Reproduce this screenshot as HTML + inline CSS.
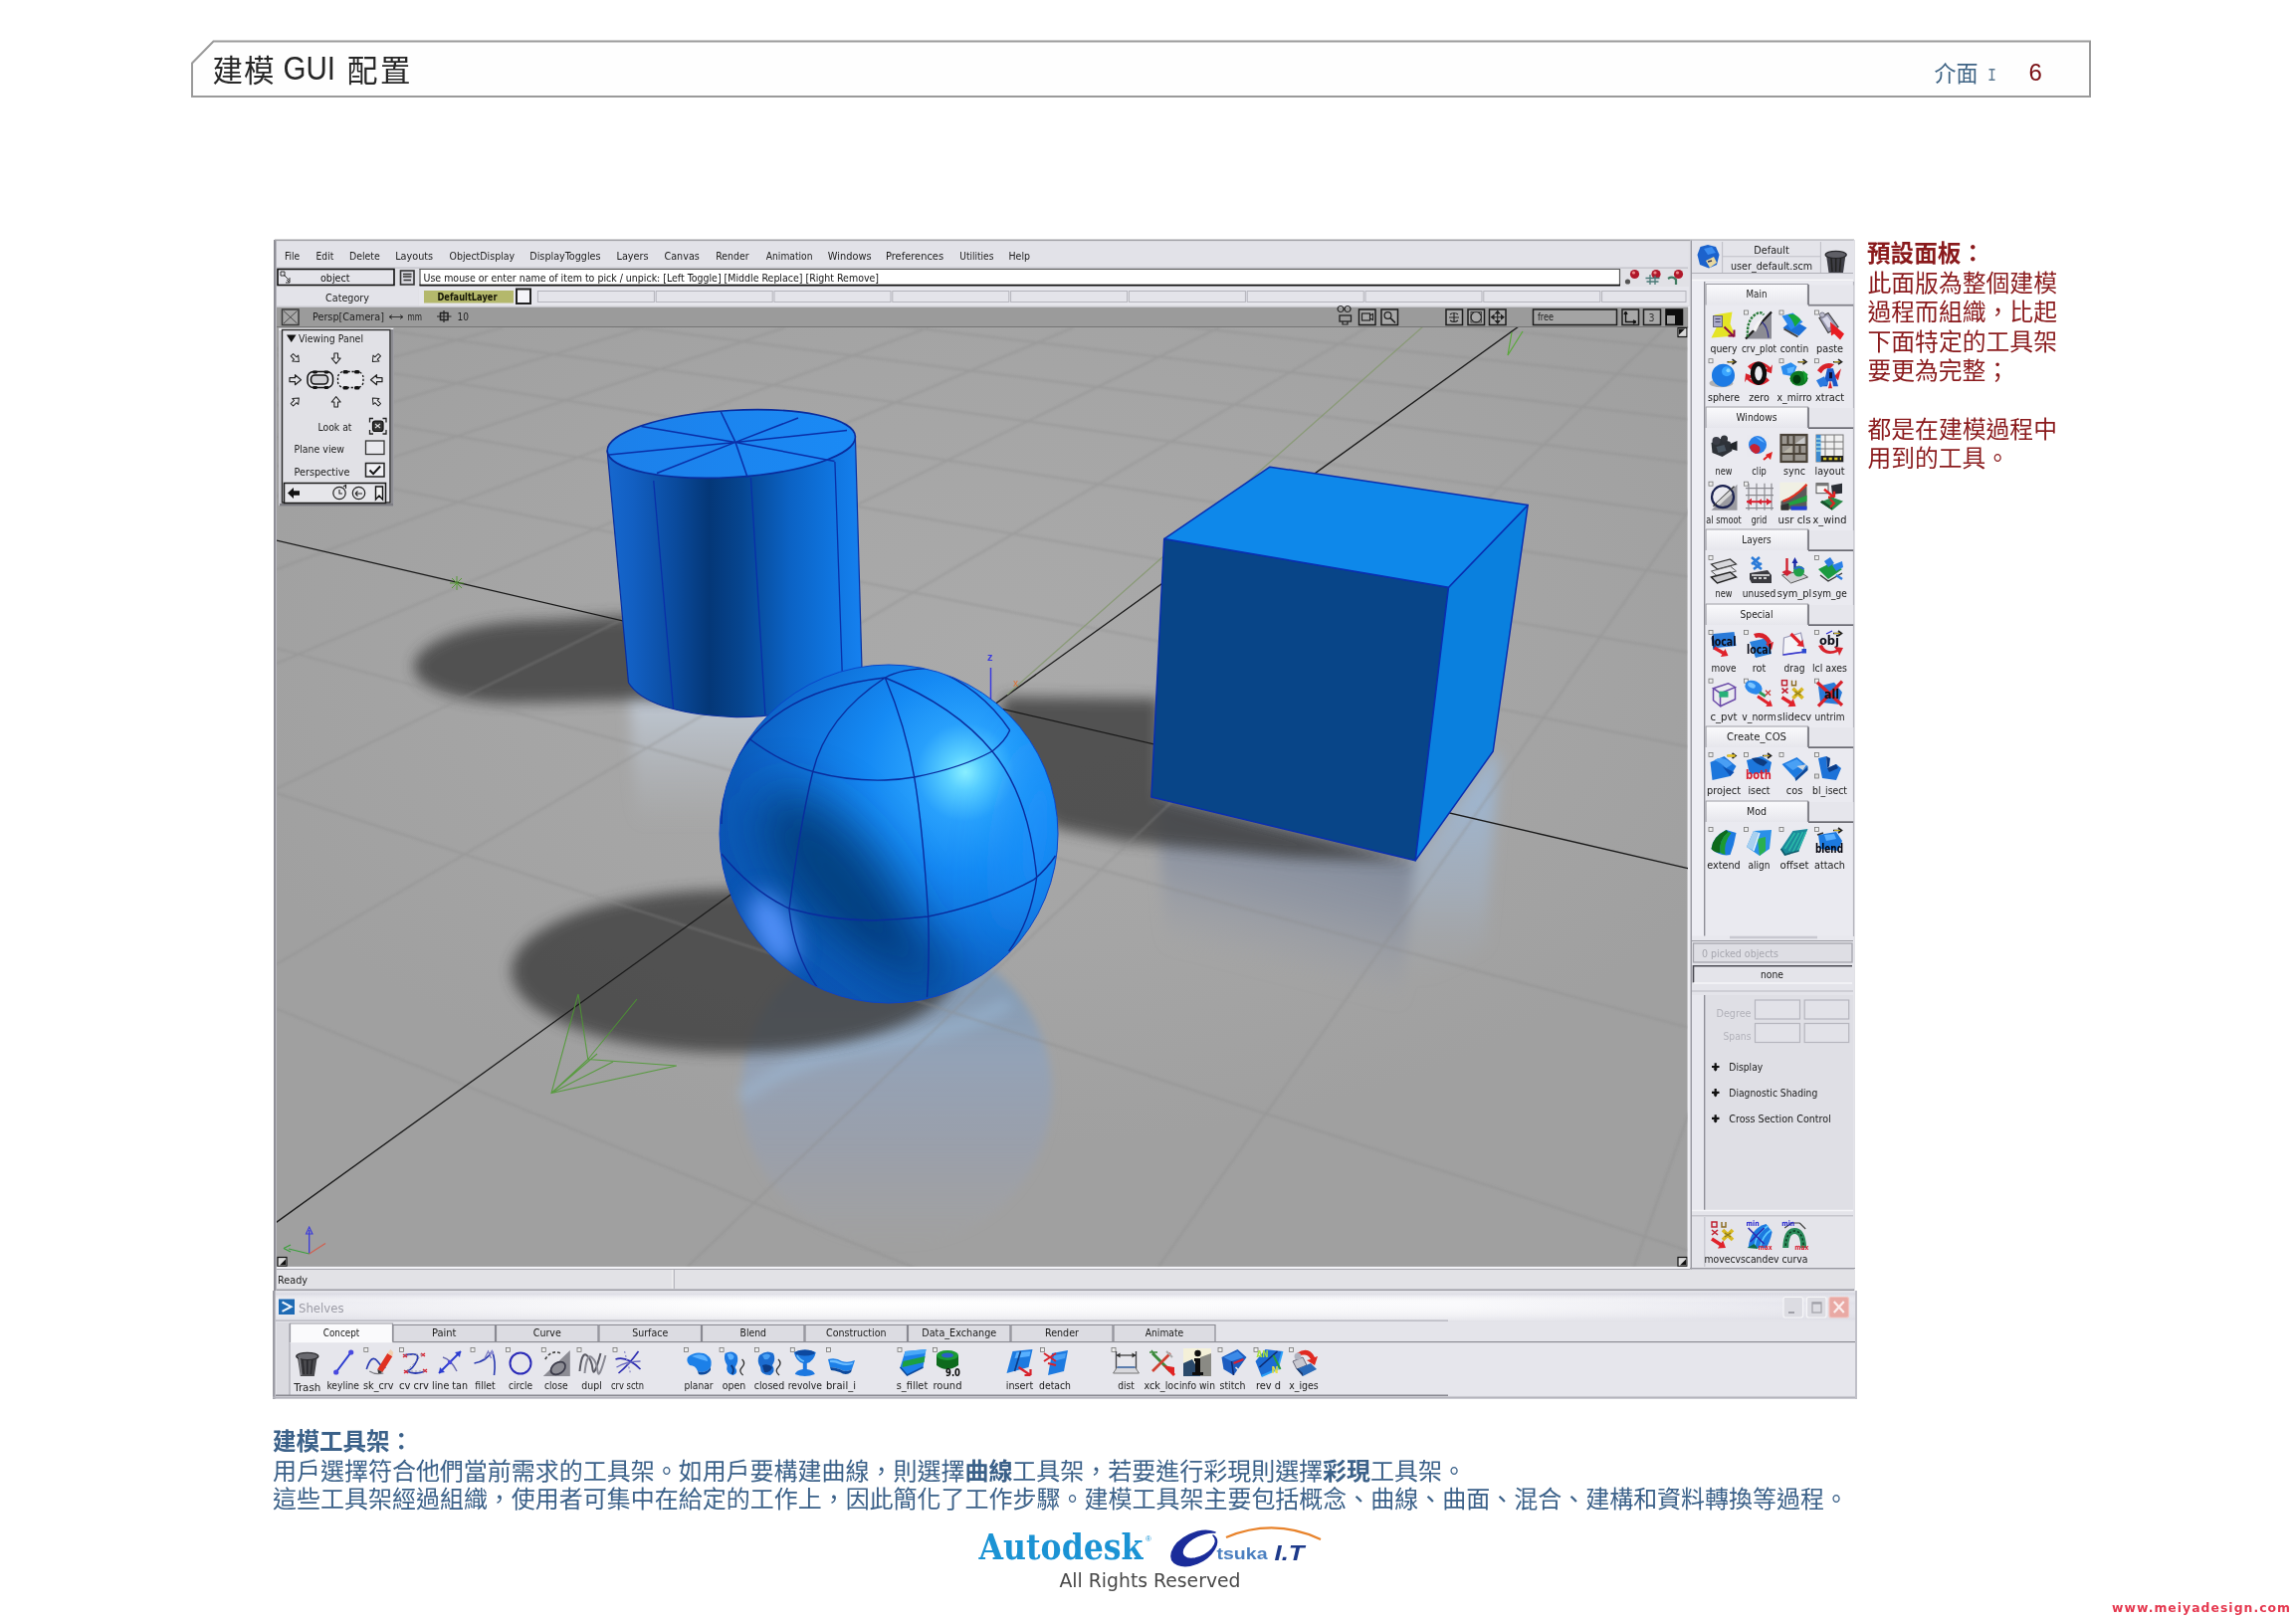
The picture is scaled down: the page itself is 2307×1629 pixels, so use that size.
<!DOCTYPE html>
<html lang="zh-Hant"><head><meta charset="utf-8"><title>建模 GUI 配置</title>
<style>
html,body{margin:0;padding:0;background:#fff}
body{width:2307px;height:1629px;overflow:hidden;position:relative}
svg{position:absolute;left:0;top:0;display:block}
svg{will-change:transform}
text{font-family:"Liberation Sans","Noto Sans CJK TC",sans-serif;white-space:pre}
.ui text{font-family:"DejaVu Sans Condensed","Liberation Sans",sans-serif}
</style></head><body>
<svg width="2307" height="1629" viewBox="0 0 2307 1629">
<g id="slide">
<path d="M193 97L193 63.5L214.5 41.5L2100 41.5L2100 97Z" fill="#fefefe" stroke="#9a9a9a" stroke-width="2" />
<text y="82" font-size="30.5" fill="#262626"><tspan x="213.5">建</tspan><tspan x="245">模</tspan><tspan x="349">配</tspan><tspan x="382">置</tspan></text>
<text x="284.5" y="80" font-size="32.5" fill="#262626" textLength="52.5" lengthAdjust="spacingAndGlyphs" >GUI</text>
<text x="1943.5" y="82" font-size="22.5" fill="#3f6485" textLength="44" lengthAdjust="spacingAndGlyphs" >介面</text>
<text x="1997" y="80.5" font-size="18" fill="#5b7890" textLength="9" lengthAdjust="spacingAndGlyphs" style='font-family:"Liberation Mono",monospace' >I</text>
<text x="2038.5" y="81" font-size="24" fill="#7a0f14" >6</text>
<text x="1876" y="263" font-size="24" fill="#8a1a1c" font-weight="bold" textLength="118" lengthAdjust="spacingAndGlyphs" >預設面板：</text>
<text x="1876.5" y="293" font-size="24" fill="#8a1a1c" textLength="190.5" lengthAdjust="spacingAndGlyphs" >此面版為整個建模</text>
<text x="1876.5" y="322.3" font-size="24" fill="#8a1a1c" textLength="190.5" lengthAdjust="spacingAndGlyphs" >過程而組織，比起</text>
<text x="1876.5" y="351.6" font-size="24" fill="#8a1a1c" textLength="190.5" lengthAdjust="spacingAndGlyphs" >下面特定的工具架</text>
<text x="1876.5" y="380.90000000000003" font-size="24" fill="#8a1a1c" textLength="142.5" lengthAdjust="spacingAndGlyphs" >要更為完整；</text>
<text x="1876.5" y="439.50000000000006" font-size="24" fill="#8a1a1c" textLength="190.5" lengthAdjust="spacingAndGlyphs" >都是在建模過程中</text>
<text x="1876.5" y="468.80000000000007" font-size="24" fill="#8a1a1c" textLength="142.5" lengthAdjust="spacingAndGlyphs" >用到的工具。</text>
<text x="274" y="1457" font-size="24" fill="#3b6189" font-weight="bold" textLength="141" lengthAdjust="spacingAndGlyphs" >建模工具架：</text>
<text x="274" y="1486.5" font-size="24" fill="#3b6189" textLength="1199" lengthAdjust="spacing"><tspan>用戶選擇符合他們當前需求的工具架。如用戶要構建曲線，則選擇</tspan><tspan font-weight="bold">曲線</tspan><tspan>工具架，若要進行彩現則選擇</tspan><tspan font-weight="bold">彩現</tspan><tspan>工具架。</tspan></text>
<text x="274" y="1515" font-size="24" fill="#3b6189" textLength="1583" lengthAdjust="spacingAndGlyphs" >這些工具架經過組織，使用者可集中在給定的工作上，因此簡化了工作步驟。建模工具架主要包括概念、曲線、曲面、混合、建構和資料轉換等過程。</text>
<text x="983.5" y="1567.3" font-size="35" fill="#1b93d4" font-weight="bold" textLength="165" lengthAdjust="spacingAndGlyphs" style='font-family:"DejaVu Serif Condensed","DejaVu Serif","Liberation Serif",serif' >Autodesk</text>
<text x="1151" y="1549" font-size="8" fill="#1b95d6" >®</text>
<path d="M1221 1540C1205 1534 1182 1546 1177.5 1560C1174 1572 1188 1577 1203 1571C1218 1565 1228 1549 1219 1543C1227 1551 1214 1563 1201 1566C1190 1568 1186 1562 1189 1556C1194 1546 1210 1539 1221 1540Z" fill="#1a2c9a" stroke="#1a2c9a" stroke-width="1.5" stroke-linejoin="round"/>
<path d="M1232 1545Q1280 1525 1327 1547" fill="none" stroke="#e8822a" stroke-width="2.2" />
<text x="1222.5" y="1567" font-size="17" fill="#4a7fc0" font-weight="bold" textLength="51" lengthAdjust="spacingAndGlyphs" >tsuka</text>
<text x="1280.5" y="1568" font-size="22" fill="#1d3a8a" font-weight="bold" textLength="30" lengthAdjust="spacingAndGlyphs" font-style="italic">I.T</text>
<text x="1064.5" y="1595" font-size="19" fill="#484848" textLength="182" lengthAdjust="spacingAndGlyphs" style='font-family:"DejaVu Sans","Liberation Sans",sans-serif' >All Rights Reserved</text>
<text x="2122" y="1620" font-size="12.4" font-weight="bold" fill="#e5384f" textLength="179" lengthAdjust="spacing" style='font-family:"DejaVu Sans","Liberation Sans",sans-serif'>www.meiyadesign.com</text>
</g>
<g id="chrome">
<g class="ui">
<rect x="276" y="241" width="1587" height="1056" fill="#e1e1e6" />
<rect x="275" y="241" width="2.5" height="1056" fill="#8e8e96" />
<rect x="276" y="240.5" width="1587" height="1.6" fill="#a2a2a8" />
<rect x="1862.3" y="241" width="1.2" height="1056" fill="#c4c4cc" />
<rect x="278" y="243" width="1418" height="26" fill="#e2e2e8" />
<text x="286" y="261.3" font-size="10.8" fill="#1c1c1c" textLength="15.2" lengthAdjust="spacingAndGlyphs" >File</text>
<text x="317.6" y="261.3" font-size="10.8" fill="#1c1c1c" textLength="17.7" lengthAdjust="spacingAndGlyphs" >Edit</text>
<text x="350.9" y="261.3" font-size="10.8" fill="#1c1c1c" textLength="30.9" lengthAdjust="spacingAndGlyphs" >Delete</text>
<text x="397.2" y="261.3" font-size="10.8" fill="#1c1c1c" textLength="37.9" lengthAdjust="spacingAndGlyphs" >Layouts</text>
<text x="451.5" y="261.3" font-size="10.8" fill="#1c1c1c" textLength="65.7" lengthAdjust="spacingAndGlyphs" >ObjectDisplay</text>
<text x="532.3" y="261.3" font-size="10.8" fill="#1c1c1c" textLength="71.2" lengthAdjust="spacingAndGlyphs" >DisplayToggles</text>
<text x="619.5" y="261.3" font-size="10.8" fill="#1c1c1c" textLength="32.1" lengthAdjust="spacingAndGlyphs" >Layers</text>
<text x="667.5" y="261.3" font-size="10.8" fill="#1c1c1c" textLength="35.3" lengthAdjust="spacingAndGlyphs" >Canvas</text>
<text x="719.3" y="261.3" font-size="10.8" fill="#1c1c1c" textLength="33.3" lengthAdjust="spacingAndGlyphs" >Render</text>
<text x="769.8" y="261.3" font-size="10.8" fill="#1c1c1c" textLength="46.7" lengthAdjust="spacingAndGlyphs" >Animation</text>
<text x="831.8" y="261.3" font-size="10.8" fill="#1c1c1c" textLength="43.7" lengthAdjust="spacingAndGlyphs" >Windows</text>
<text x="890" y="261.3" font-size="10.8" fill="#1c1c1c" textLength="58.1" lengthAdjust="spacingAndGlyphs" >Preferences</text>
<text x="964.3" y="261.3" font-size="10.8" fill="#1c1c1c" textLength="34.1" lengthAdjust="spacingAndGlyphs" >Utilities</text>
<text x="1013.5" y="261.3" font-size="10.8" fill="#1c1c1c" textLength="21.5" lengthAdjust="spacingAndGlyphs" >Help</text>
<rect x="278" y="268.6" width="1418" height="1" fill="#b8b8c0" />
<rect x="279" y="270.5" width="117" height="16" fill="#e4e4ea" stroke="#111" stroke-width="1.6" />
<path d="M282 273h4v4h-4zM285 276l6 6M288 281l3 3M291 279v5h-4" fill="none" stroke="#333" stroke-width="1" />
<text x="322" y="283.2" font-size="10.8" fill="#111" textLength="29.5" lengthAdjust="spacingAndGlyphs" >object</text>
<rect x="402.5" y="272" width="13.5" height="14" fill="#d8d8de" stroke="#333" stroke-width="1.6" />
<path d="M405 275.5h8.5M405 278h8.5M405.5 281.5h7.5" fill="none" stroke="#333" stroke-width="1.3" />
<rect x="421.5" y="270" width="1206" height="17" fill="#ffffff" />
<path d="M421.5 270.5H1627.5" fill="none" stroke="#555" stroke-width="1.2" />
<path d="M422 270V287M1627.5 270V287" fill="none" stroke="#555" stroke-width="1.2" />
<path d="M421.5 286.7H1628" fill="none" stroke="#111" stroke-width="1.8" />
<text x="425.5" y="283.3" font-size="10.6" fill="#111" textLength="457.5" lengthAdjust="spacingAndGlyphs" >Use mouse or enter name of item to pick / unpick: [Left Toggle] [Middle Replace] [Right Remove]</text>
<circle cx="1642.5" cy="275.5" r="4.6" fill="#b0182a"/>
<circle cx="1641.5" cy="274" r="1.6" fill="#e88"/>
<circle cx="1635.5" cy="283" r="2.6" fill="#555"/>
<circle cx="1664.0" cy="275.5" r="4.6" fill="#b0182a"/>
<circle cx="1663.0" cy="274" r="1.6" fill="#e88"/>
<path d="M1653.5 279.5h14M1654.5 283h12M1658.0 276v10M1663.0 277v9" fill="none" stroke="#4a7a78" stroke-width="1.3" />
<circle cx="1686.5" cy="275.5" r="4.6" fill="#b0182a"/>
<circle cx="1685.5" cy="274" r="1.6" fill="#e88"/>
<path d="M1676 280q5 -3 8 1v5" fill="none" stroke="#3f7a60" stroke-width="2.2" />
<rect x="278" y="289" width="142" height="19" fill="#e3e3e9" />
<text x="327" y="303.2" font-size="10.8" fill="#1c1c1c" textLength="44" lengthAdjust="spacingAndGlyphs" >Category</text>
<rect x="421" y="288" width="1276" height="20" fill="#e6e6ec" />
<rect x="426" y="292" width="90" height="12.5" fill="#b4b86c" />
<text x="439.5" y="301.8" font-size="10.6" fill="#151505" font-weight="bold" textLength="60" lengthAdjust="spacingAndGlyphs" >DefaultLayer</text>
<rect x="519" y="290.5" width="14" height="14.5" fill="#f4f4f8" stroke="#222" stroke-width="2" />
<rect x="540.4" y="292.5" width="117" height="11" fill="#e4e4ea" stroke="#b4b4bc" stroke-width="1" />
<rect x="659.2" y="292.5" width="117" height="11" fill="#e4e4ea" stroke="#b4b4bc" stroke-width="1" />
<rect x="778.0" y="292.5" width="117" height="11" fill="#e4e4ea" stroke="#b4b4bc" stroke-width="1" />
<rect x="896.8" y="292.5" width="117" height="11" fill="#e4e4ea" stroke="#b4b4bc" stroke-width="1" />
<rect x="1015.6" y="292.5" width="117" height="11" fill="#e4e4ea" stroke="#b4b4bc" stroke-width="1" />
<rect x="1134.4" y="292.5" width="117" height="11" fill="#e4e4ea" stroke="#b4b4bc" stroke-width="1" />
<rect x="1253.2" y="292.5" width="117" height="11" fill="#e4e4ea" stroke="#b4b4bc" stroke-width="1" />
<rect x="1372.0" y="292.5" width="117" height="11" fill="#e4e4ea" stroke="#b4b4bc" stroke-width="1" />
<rect x="1490.8" y="292.5" width="117" height="11" fill="#e4e4ea" stroke="#b4b4bc" stroke-width="1" />
<rect x="1609.6" y="292.5" width="84.4" height="11" fill="#e4e4ea" stroke="#b4b4bc" stroke-width="1" />
<rect x="278" y="308.5" width="1419" height="20.5" fill="#9b9b9b" />
<rect x="278" y="307.6" width="1419" height="1.2" fill="#c8c8cc" />
<rect x="278" y="328.2" width="1419" height="1.5" fill="#6e6e6e" />
<rect x="283.5" y="311" width="16.5" height="15.5" fill="#a6a6a6" stroke="#3a3a3a" stroke-width="1.5" />
<path d="M285 312.5L298.5 325M298.5 312.5L285 325" fill="none" stroke="#4a4a4a" stroke-width="1" />
<text x="314" y="322.3" font-size="10.8" fill="#222" textLength="72" lengthAdjust="spacingAndGlyphs" >Persp[Camera]</text>
<path d="M391 318.5h14M391 318.5l3 -2M391 318.5l3 2M405 318.5l-3 -2M405 318.5l-3 2" fill="none" stroke="#333" stroke-width="1" />
<text x="409.5" y="322.3" font-size="10.5" fill="#222" textLength="14.5" lengthAdjust="spacingAndGlyphs" >mm</text>
<rect x="442.5" y="314.5" width="7.5" height="7" fill="none" stroke="#222" stroke-width="1.5" />
<path d="M439 318h14.5M446 312v12" fill="none" stroke="#222" stroke-width="1.2" />
<text x="459.5" y="322.3" font-size="10.5" fill="#222" textLength="11.5" lengthAdjust="spacingAndGlyphs" >10</text>
<path d="M1347 313.5a3 3 0 1 1 0.1 0M1354 313.5a3 3 0 1 1 0.1 0" fill="none" stroke="#222" stroke-width="1.2" />
<rect x="1346" y="317" width="11.5" height="6" fill="none" stroke="#222" stroke-width="1.3" />
<path d="M1349 323v3h5v-3" fill="none" stroke="#222" stroke-width="1.2" />
<rect x="1365.5" y="311" width="16.5" height="15.5" fill="#a8a8a8" stroke="#1e1e1e" stroke-width="1.5" />
<rect x="1368.5" y="315" width="8" height="7" fill="none" stroke="#222" stroke-width="1.2" />
<path d="M1376.5 317l3 -1.5v6l-3 -1.5" fill="none" stroke="#222" stroke-width="1.1" />
<rect x="1388" y="311" width="16.5" height="15.5" fill="#a8a8a8" stroke="#1e1e1e" stroke-width="1.5" />
<circle cx="1394.5" cy="317" r="3.4" fill="none" stroke="#222" stroke-width="1.3"/>
<path d="M1397 319.5l5 5" fill="none" stroke="#222" stroke-width="1.6" />
<rect x="1453" y="311" width="16.5" height="15.5" fill="#a8a8a8" stroke="#1e1e1e" stroke-width="1.5" />
<path d="M1456 319h10M1461 314v10M1457 316q4 -3 8 0M1457 322q4 3 8 0" fill="none" stroke="#222" stroke-width="1.1" />
<rect x="1475" y="311" width="16.5" height="15.5" fill="#a8a8a8" stroke="#1e1e1e" stroke-width="1.5" />
<circle cx="1483.2" cy="318.7" r="5.2" fill="none" stroke="#222" stroke-width="1.2"/>
<rect x="1478" y="313.5" width="10.5" height="10.5" fill="none" stroke="#333" stroke-width="0.8" />
<rect x="1496.5" y="311" width="16.5" height="15.5" fill="#a8a8a8" stroke="#1e1e1e" stroke-width="1.5" />
<path d="M1499 318.7h11.5M1504.7 313v11.5M1504.7 312.5l-2 2.5h4zM1504.7 325l-2 -2.5h4zM1498.5 318.7l2.5 -2v4zM1511 318.7l-2.5 -2v4z" fill="#222" stroke="#222" stroke-width="1.1" />
<rect x="1540.5" y="311" width="84" height="15.5" fill="#a4a4a4" stroke="#1e1e1e" stroke-width="1.5" />
<text x="1545" y="322.2" font-size="10.5" fill="#222" textLength="16" lengthAdjust="spacingAndGlyphs" >free</text>
<rect x="1630" y="311" width="16.5" height="15.5" fill="#a8a8a8" stroke="#1e1e1e" stroke-width="1.5" />
<path d="M1633.5 313v10.5h10.5M1633.5 313l-1.5 3M1633.5 313l1.5 3M1644 323.5l-3 -1.5M1644 323.5l-3 1.5" fill="none" stroke="#111" stroke-width="1.4" />
<rect x="1651.5" y="311" width="17" height="15.5" fill="#a8a8a8" stroke="#1e1e1e" stroke-width="1.5" />
<text x="1656.5" y="323" font-size="10.5" fill="#333" >3</text>
<rect x="1674" y="311" width="16.5" height="15.5" fill="#0c0c0c" stroke="#0c0c0c" stroke-width="1.5" />
<rect x="1675" y="317" width="8" height="8.5" fill="#a0a0a0" />
<rect x="1696.2" y="308" width="1.6" height="966" fill="#f2f2f6" />
<rect x="278" y="1273" width="1420" height="2" fill="#f2f2f6" />
<rect x="278" y="1275.5" width="1585" height="20" fill="#e2e2e6" />
<rect x="278" y="1275" width="1585" height="1" fill="#a8a8b0" />
<rect x="278" y="1295.5" width="1585" height="1.5" fill="#9c9ca4" />
<rect x="675.5" y="1276" width="1.2" height="19" fill="#fafafa" />
<rect x="676.7" y="1276" width="1" height="19" fill="#a8a8b0" />
<text x="279" y="1289.5" font-size="10.8" fill="#222" textLength="30" lengthAdjust="spacingAndGlyphs" >Ready</text>
</g>
</g>
<g id="scene">
<defs>
<clipPath id="vp"><rect x="278" y="329" width="1417.5" height="943.8"/></clipPath>
<radialGradient id="floor" gradientUnits="userSpaceOnUse" cx="1000" cy="660" r="820" gradientTransform="translate(1000 660) scale(1 0.6) translate(-1000 -660)"><stop offset="0" stop-color="#aaaaaa"/><stop offset="0.6" stop-color="#a5a5a5"/><stop offset="1" stop-color="#a0a0a0"/></radialGradient>
<filter id="b1" filterUnits="userSpaceOnUse" x="270" y="320" width="1440" height="960"><feGaussianBlur stdDeviation="0.9"/></filter>
<linearGradient id="gridg" gradientUnits="userSpaceOnUse" x1="0" y1="329" x2="0" y2="1273"><stop offset="0" stop-color="#cacaca"/><stop offset="0.3" stop-color="#c0c0c0"/><stop offset="0.5" stop-color="#a6a6a6"/><stop offset="0.75" stop-color="#949494"/><stop offset="1" stop-color="#8a8a8a"/></linearGradient>
<filter id="b4" x="-30%" y="-30%" width="160%" height="160%"><feGaussianBlur stdDeviation="4"/></filter>
<filter id="b7" x="-30%" y="-30%" width="160%" height="160%"><feGaussianBlur stdDeviation="7"/></filter>
<filter id="b12" x="-40%" y="-40%" width="180%" height="180%"><feGaussianBlur stdDeviation="12"/></filter>
<filter id="b25" x="-60%" y="-60%" width="220%" height="220%"><feGaussianBlur stdDeviation="25"/></filter>
<filter id="sb25" filterUnits="userSpaceOnUse" x="600" y="560" width="600" height="560"><feGaussianBlur stdDeviation="24"/></filter>
<filter id="sb12" filterUnits="userSpaceOnUse" x="600" y="560" width="600" height="560"><feGaussianBlur stdDeviation="11"/></filter>
<filter id="b40" x="-80%" y="-80%" width="260%" height="260%"><feGaussianBlur stdDeviation="40"/></filter>
<linearGradient id="cylb" gradientUnits="userSpaceOnUse" x1="611" y1="0" x2="864" y2="0"><stop offset="0" stop-color="#1668cf"/><stop offset="0.10" stop-color="#125fc2"/><stop offset="0.27" stop-color="#0a4a9c"/><stop offset="0.40" stop-color="#043777"/><stop offset="0.53" stop-color="#06458f"/><stop offset="0.72" stop-color="#0b62c4"/><stop offset="0.88" stop-color="#0f74de"/><stop offset="1" stop-color="#1580ee"/></linearGradient>
<linearGradient id="cylt" gradientUnits="userSpaceOnUse" x1="611" y1="0" x2="860" y2="0"><stop offset="0" stop-color="#1c80ea"/><stop offset="1" stop-color="#1a8af5"/></linearGradient>
<radialGradient id="sph" gradientUnits="userSpaceOnUse" cx="970" cy="776" r="330"><stop offset="0" stop-color="#8af0ff"/><stop offset="0.055" stop-color="#5ad0ff"/><stop offset="0.15" stop-color="#28a0fc"/><stop offset="0.3" stop-color="#158af4"/><stop offset="0.5" stop-color="#0f72da"/><stop offset="0.7" stop-color="#0b5cbc"/><stop offset="0.9" stop-color="#0a50aa"/><stop offset="1" stop-color="#0a4ca2"/></radialGradient>
<clipPath id="sphc"><circle cx="893" cy="838" r="170"/></clipPath>
<linearGradient id="refc" gradientUnits="userSpaceOnUse" x1="1289" y1="833" x2="1254" y2="975"><stop offset="0" stop-color="#7e889a" stop-opacity="0.95"/><stop offset="0.45" stop-color="#8a92a2" stop-opacity="0.7"/><stop offset="0.8" stop-color="#969ba6" stop-opacity="0.3"/><stop offset="1" stop-color="#a0a2a6" stop-opacity="0"/></linearGradient>
<linearGradient id="refc2" gradientUnits="userSpaceOnUse" x1="1461" y1="810" x2="1461" y2="985"><stop offset="0" stop-color="#9fb6d0" stop-opacity="0.9"/><stop offset="0.5" stop-color="#a2b2c6" stop-opacity="0.55"/><stop offset="1" stop-color="#a4a8ae" stop-opacity="0"/></linearGradient>
<linearGradient id="refcy" gradientUnits="userSpaceOnUse" x1="0" y1="700" x2="0" y2="830"><stop offset="0" stop-color="#c2ccd8" stop-opacity="0.9"/><stop offset="1" stop-color="#b8bec6" stop-opacity="0"/></linearGradient>
<linearGradient id="refs" gradientUnits="userSpaceOnUse" x1="0" y1="1000" x2="0" y2="1256"><stop offset="0" stop-color="#7a98ba" stop-opacity="0.7"/><stop offset="0.25" stop-color="#8ea2be" stop-opacity="0.72"/><stop offset="0.6" stop-color="#969fb2" stop-opacity="0.6"/><stop offset="0.85" stop-color="#9ea2ac" stop-opacity="0.32"/><stop offset="1" stop-color="#a4a5a8" stop-opacity="0"/></linearGradient>
</defs>
<g clip-path="url(#vp)">
<rect x="278" y="329" width="1417.5" height="943.8" fill="#a0a0a0" />
<rect x="278" y="329" width="1417.5" height="943.8" fill="url(#floor)" />
<g filter="url(#b7)">
<path d="M1162 802L1422 865L1408 1010L1172 950Z" fill="url(#refc)" />
<path d="M1422 865L1500 756L1506 758L1492 950L1410 1000Z" fill="url(#refc2)" />
<path d="M632 690Q745 730 862 690L862 830L640 830Z" fill="url(#refcy)" />
</g>
<circle cx="901" cy="1097" r="156" fill="url(#refs)" filter="url(#b4)"/>
<path d="M748 1100Q800 1062 880 1050T1010 1010" fill="none" stroke="#a4cbee" stroke-width="14" opacity="0.32" filter="url(#b7)" stroke-linecap="round"/>
<g filter="url(#b7)" fill="#3c3c3c" opacity="0.8">
<ellipse cx="528" cy="665" rx="112" ry="41" transform="rotate(-3 528 665)"/>
<path d="M520 625L640 618L760 660L760 700L540 706Z" fill="#3c3c3c" />
<ellipse cx="737" cy="976" rx="223" ry="82"/>
<path d="M1008 700L1165 702L1165 800L1421 866L1300 862L1130 846L1062 832L1030 805L1000 760Z" fill="#3c3c3c" />
</g>
<g filter="url(#b1)"><path d="M278.0 1013.9L1695.5 1589.3M278.0 797.3L1695.5 1256.4M278.0 651.6L1695.5 1032.4M278.0 468.0L1695.5 750.2M278.0 406.4L1695.5 655.5M278.0 356.9L1695.5 579.5M278.0 316.4L1695.5 517.2M278.0 282.6L1695.5 465.3M278.0 253.9L1695.5 421.2M278.0 229.3L1695.5 383.4M278.0 208.0L1695.5 350.6M1979.6 329.0L1641.8 1272.8M1825.9 329.0L1164.1 1272.8M1673.7 329.0L690.8 1272.8M1373.4 329.0L-242.8 1272.8M1225.3 329.0L-703.1 1272.8M1078.6 329.0L-1159.3 1272.8M933.2 329.0L-1611.2 1272.8M789.2 329.0L-2059.1 1272.8M646.4 329.0L-2503.0 1272.8M504.9 329.0L-2942.8 1272.8M364.7 329.0L-3378.8 1272.8" fill="none" stroke="#8c8c8c" stroke-width="2.0" opacity="0.42"/></g>
<line x1="277.5" y1="543" x2="1697" y2="872.8918" stroke="#1a1a1a" stroke-width="1.3" />
<line x1="1526" y1="328" x2="277.5" y2="1228.5" stroke="#1a1a1a" stroke-width="1.3" />
<line x1="1430" y1="328" x2="1012" y2="698" stroke="#8a9a78" stroke-width="1.3" />
<g stroke="#4f9a2a" stroke-width="1" opacity="0.9"><line x1="452" y1="586" x2="466" y2="586" stroke="#4f9a2a" stroke-width="1" /><line x1="459" y1="579" x2="459" y2="593" stroke="#4f9a2a" stroke-width="1" /><line x1="454" y1="581" x2="464" y2="591" stroke="#4f9a2a" stroke-width="1" /><line x1="454" y1="591" x2="464" y2="581" stroke="#4f9a2a" stroke-width="1" /></g>
<path d="M1519 334L1515 357L1530 333" fill="none" stroke="#5aa83a" stroke-width="1.2" />
<path d="M610.2 453.4L631.5 686.0Q650.0 716.0 735.0 720.5Q830.0 722.0 866.0 672.0L859.4 438.6Z" fill="url(#cylb)" stroke="#0a2fa0" stroke-width="1.2" />
<ellipse cx="734.8" cy="446" rx="124.8" ry="33.6" transform="rotate(-3.4 734.8 446)" fill="url(#cylt)" stroke="#0a2c9c" stroke-width="1.6"/>
<path d="M739.0 444.4L724.4 414.0M739.0 444.4L802.0 420.0M739.0 444.4L644.4 428.5M739.0 444.4L851.0 432.5M739.0 444.4L612.0 457.0M739.0 444.4L660.0 475.5M739.0 444.4L751.0 479.5M739.0 444.4L838.5 463.5" fill="none" stroke="#0a30a8" stroke-width="1.5" />
<path d="M656.7 483L676.7 713M754.4 480L768.9 718M838.9 464L846.7 690" fill="none" stroke="#0a30a8" stroke-width="1.3" />
<polygon points="1169.7,541.6 1455.5,590.2 1422.2,864.8 1156.9,801.0" fill="#084588" stroke="#0a2fb0" stroke-width="1.5" stroke-linejoin="round"/>
<polygon points="1455.5,590.2 1535.2,507.5 1500.2,755.0 1422.2,864.8" fill="#0a80de" stroke="#0a2fb0" stroke-width="1.5" stroke-linejoin="round"/>
<polygon points="1276.0,469.2 1535.2,507.5 1455.5,590.2 1169.7,541.6" fill="#0e88ea" stroke="#0a2fb0" stroke-width="1.5" stroke-linejoin="round"/>
<line x1="995.5" y1="671" x2="995.5" y2="704" stroke="#3a3ae0" stroke-width="1.5" />
<text x="992" y="664" font-size="11" fill="#3a3ae0" font-weight="bold" >z</text>
<text x="1018" y="690" font-size="10" fill="#e07030" >x</text>
<circle cx="893" cy="838" r="170" fill="url(#sph)"/>
<g clip-path="url(#sphc)">
<g filter="url(#sb25)">
<ellipse cx="838" cy="880" rx="105" ry="46" transform="rotate(50 838 880)" fill="#03326a" opacity="0.8"/>
<ellipse cx="908" cy="958" rx="62" ry="32" transform="rotate(35 908 958)" fill="#033672" opacity="0.65"/>
<ellipse cx="1040" cy="840" rx="30" ry="100" transform="rotate(8 1040 840)" fill="#1a90fa" opacity="0.7"/>
</g>
<g filter="url(#sb12)"><ellipse cx="777" cy="934" rx="19" ry="40" transform="rotate(-25 777 934)" fill="#5a96ff" opacity="0.9"/></g>
<path d="M889.3 681Q830 720 816.6 776T793 914Q798 960 821 992M889.3 681Q910 730 918.6 780.7T932.7 921Q934 965 931.5 1002M889.3 681Q960 710 997 755T1041.7 881.5Q1036 925 1013.6 956M889.3 681Q810 690 767 729T725 828M889.3 681Q905 672 936 671.6Q985 690 1014.7 733.8M751 741Q785 767 819 776T889 784Q905 783.5 919.8 780.7Q965 772 997 755Q1010 745 1014.7 733.8M725 858Q755 895 793 913Q835 925 877.6 925Q905 924 932.7 921Q995 908 1039 883.8Q1052 873 1060.5 860" fill="none" stroke="#0a2c9c" stroke-width="1.4" />
</g>
<circle cx="893" cy="838" r="170" fill="none" stroke="#0b45c8" stroke-width="1"/>
<path d="M554 1098.5L581 999L590.8 1064.5L679.8 1071ZM554 1098.5L590.8 1064.5M554 1098.5L600 1059M554 1098.5L616 1067M590.8 1064.5L640 1004" fill="none" stroke="#4c9a30" stroke-width="1.1" opacity="0.85"/>
<rect x="1686" y="329.5" width="9" height="9" fill="#d8d8d8" stroke="#111" stroke-width="1.2" />
<path d="M1687 330.5l6 0l-6 6z" fill="#111" />
<rect x="279" y="1263.5" width="9" height="9" fill="#d8d8d8" stroke="#111" stroke-width="1.2" />
<path d="M287 1265.5l0 6l-6 0z" fill="#111" />
<rect x="1686" y="1263.5" width="9" height="9" fill="#d8d8d8" stroke="#111" stroke-width="1.2" />
<path d="M1694 1265.5l0 6l-6 0z" fill="#111" />
<line x1="310.7" y1="1260" x2="310.7" y2="1236" stroke="#3a3adc" stroke-width="1.3" />
<path d="M307.5 1240L310.7 1233L314 1240Z" fill="none" stroke="#3a3adc" stroke-width="1.1" />
<path d="M310.7 1260L290 1255M285 1254.5L292 1251M285 1254.5L292 1258" fill="none" stroke="#3aa03a" stroke-width="1.2" />
<line x1="310.7" y1="1260" x2="327" y2="1249.5" stroke="#d06050" stroke-width="1.3" />
</g>
</g>
<g id="vpanel">
<g class="ui">
<rect x="280" y="329.5" width="115.5" height="178.5" fill="#c9c9cf" />
<rect x="280.5" y="330" width="114.5" height="2" fill="#f4f4f6" />
<rect x="393" y="331" width="2.5" height="177" fill="#8c8c92" />
<rect x="281" y="506" width="114" height="2.4" fill="#7c7c82" />
<rect x="283.5" y="331.5" width="108.5" height="173.5" fill="#e1e1e6" stroke="#2a2a2a" stroke-width="1.4" />
<path d="M288 336.5h9.5l-4.75 7.5z" fill="#111" />
<text x="300" y="344.3" font-size="10.8" fill="#222" textLength="65" lengthAdjust="spacingAndGlyphs" >Viewing Panel</text>
<path d="M-5.5 -2H0V-5L6 0L0 5V2H-5.5Z" transform="translate(296.7 360) rotate(45) scale(0.85)" fill="#e6e6ea" stroke="#222" stroke-width="1.2" stroke-linejoin="round"/>
<path d="M-5.5 -2H0V-5L6 0L0 5V2H-5.5Z" transform="translate(337.7 360) rotate(90) scale(0.9)" fill="#e6e6ea" stroke="#222" stroke-width="1.2" stroke-linejoin="round"/>
<path d="M-5.5 -2H0V-5L6 0L0 5V2H-5.5Z" transform="translate(378 360) rotate(135) scale(0.85)" fill="#e6e6ea" stroke="#222" stroke-width="1.2" stroke-linejoin="round"/>
<path d="M-5.5 -2H0V-5L6 0L0 5V2H-5.5Z" transform="translate(296.5 381.7) rotate(0) scale(1.0)" fill="#e6e6ea" stroke="#222" stroke-width="1.2" stroke-linejoin="round"/>
<path d="M-5.5 -2H0V-5L6 0L0 5V2H-5.5Z" transform="translate(378.5 381.7) rotate(180) scale(1.0)" fill="#e6e6ea" stroke="#222" stroke-width="1.2" stroke-linejoin="round"/>
<path d="M-5.5 -2H0V-5L6 0L0 5V2H-5.5Z" transform="translate(296.7 403.5) rotate(-45) scale(0.85)" fill="#e6e6ea" stroke="#222" stroke-width="1.2" stroke-linejoin="round"/>
<path d="M-5.5 -2H0V-5L6 0L0 5V2H-5.5Z" transform="translate(337.7 404) rotate(-90) scale(0.9)" fill="#e6e6ea" stroke="#222" stroke-width="1.2" stroke-linejoin="round"/>
<path d="M-5.5 -2H0V-5L6 0L0 5V2H-5.5Z" transform="translate(378 403.5) rotate(-135) scale(0.85)" fill="#e6e6ea" stroke="#222" stroke-width="1.2" stroke-linejoin="round"/>
<rect x="309" y="373.5" width="25.5" height="16" rx="6" fill="#e8e8ec" stroke="#111" stroke-width="1.5"/>
<rect x="312.5" y="377" width="17" height="9" rx="4" fill="#d0d0d4" stroke="#111" stroke-width="1.6"/>
<rect x="314" y="372.5" width="5" height="3" fill="#111" rx="1.4"/>
<rect x="314" y="388" width="5" height="3" fill="#111" rx="1.4"/>
<rect x="325.5" y="372.5" width="5" height="3" fill="#111" rx="1.4"/>
<rect x="325.5" y="388" width="5" height="3" fill="#111" rx="1.4"/>
<rect x="339.5" y="373.5" width="25.5" height="16" rx="6" fill="#e8e8ec" stroke="#111" stroke-width="1.3" stroke-dasharray="2.2 1.8"/>
<rect x="344.5" y="372" width="5.5" height="3.6" fill="#111" rx="1.6"/>
<rect x="344.5" y="388" width="5.5" height="3.6" fill="#111" rx="1.6"/>
<rect x="356" y="372" width="5.5" height="3.6" fill="#111" rx="1.6"/>
<rect x="356" y="388" width="5.5" height="3.6" fill="#111" rx="1.6"/>
<text x="319.5" y="433" font-size="10.8" fill="#222" textLength="34" lengthAdjust="spacingAndGlyphs" >Look at</text>
<path d="M375 420.5h-3.5v4M384.5 420.5h3.5v4M375 436h-3.5v-4M384.5 436h3.5v-4" fill="none" stroke="#222" stroke-width="1.3" />
<rect x="374.5" y="423" width="10.5" height="10.5" fill="#333" stroke="#111" stroke-width="1.2" rx="2.5"/>
<path d="M377 426l5 4M382 426l-5 4" fill="none" stroke="#ddd" stroke-width="1.2" />
<text x="295.5" y="455" font-size="10.8" fill="#222" textLength="50.5" lengthAdjust="spacingAndGlyphs" >Plane view</text>
<rect x="367.5" y="443" width="18.5" height="13.5" fill="#e9e9ee" stroke="#333" stroke-width="1.3" />
<text x="295.5" y="477.5" font-size="10.8" fill="#222" textLength="56" lengthAdjust="spacingAndGlyphs" >Perspective</text>
<rect x="367.5" y="465.5" width="18.5" height="13.5" fill="#f0f0f4" stroke="#222" stroke-width="1.5" />
<path d="M371.5 472.5l3.6 3.6l7 -7.6" fill="none" stroke="#111" stroke-width="2" />
<rect x="285.5" y="485.5" width="102" height="20" fill="#e6e6ea" stroke="#1a1a1a" stroke-width="1.5" />
<path d="M289 495.5l6 -5.5v3.2h6v4.6h-6v3.2z" fill="#111" />
<circle cx="341" cy="495.5" r="6.2" fill="none" stroke="#222" stroke-width="1.2"/>
<path d="M341 492v4h3M345 489l2.5 -1.5v3.5" fill="none" stroke="#222" stroke-width="1.1" />
<circle cx="360.5" cy="495.5" r="6.2" fill="none" stroke="#222" stroke-width="1.2"/>
<path d="M357 496h7M357 496l2.5 -2.5M357 496l2.5 2.5" fill="none" stroke="#222" stroke-width="1.1" />
<path d="M377.5 489h7v13l-3.5 -4l-3.5 4z" fill="#f4f4f4" stroke="#111" stroke-width="1.4" />
</g>
</g>
<g id="rpanel">
<g class="ui">
<defs><linearGradient id="tabg" x1="0" y1="0" x2="0" y2="1"><stop offset="0" stop-color="#fbfbfd"/><stop offset="1" stop-color="#e6e6ec"/></linearGradient><filter id="ib" x="-5%" y="-5%" width="110%" height="110%"><feGaussianBlur stdDeviation="0.55"/></filter></defs>
<rect x="1698" y="241.5" width="165" height="1034" fill="#e4e4ea" />
<rect x="1698.6" y="241.5" width="1.4" height="1034" fill="#9a9aa2" />
<rect x="1700" y="243" width="162" height="31" fill="#e4e4ea" />
<path d="M1700 274.5H1862" fill="none" stroke="#b0b0b8" stroke-width="1.2" />
<path d="M1730.6 243V274M1829.4 243V274M1731 257.8H1829" fill="none" stroke="#c0c0c8" stroke-width="1.1" />
<g filter="url(#ib)">
<path d="M1716 246L1724 248L1727.5 256L1725 266L1717 269.5L1708 266L1705.5 256L1708.5 248Z" fill="#1a62cc"/><path d="M1712 250L1720 248L1724 254L1716 256Z" fill="#3a8cf0"/><path d="M1714 262L1722 258L1725 264L1718 269Z" fill="#e8d8a0"/><path d="M1716 263l4 -1" stroke="#335" stroke-width="1.6"/>
<path d="M1835 256L1837.5 274H1852L1854.5 256Z" fill="#3e3e44"/><ellipse cx="1844.7" cy="256" rx="10.5" ry="3.6" fill="#5e5e66" stroke="#2a2a2e" stroke-width="1.3"/><path d="M1840 259l1 14M1844.7 259v14M1849.5 259l-1 14" stroke="#222" stroke-width="1.5"/>
</g>
<text x="1780" y="255.3" font-size="10.8" fill="#1a1a1a" text-anchor="middle" textLength="35.5" lengthAdjust="spacingAndGlyphs" >Default</text>
<text x="1780" y="271.3" font-size="10.8" fill="#1a1a1a" text-anchor="middle" textLength="82" lengthAdjust="spacingAndGlyphs" >user_default.scm</text>
<rect x="1700" y="281.5" width="12.5" height="660" fill="#eeeef4" />
<path d="M1700 281.5H1862" fill="none" stroke="#f8f8fa" stroke-width="1.5" />
<path d="M1712.8 283V941" fill="none" stroke="#8e8e96" stroke-width="1.6" />
<rect x="1713.6" y="283" width="148.5" height="658" fill="#eaeaf0" />
<path d="M1862.5 283V941" fill="none" stroke="#b4b4bc" stroke-width="1.2" />
<rect x="1713.5" y="285" width="103" height="21.5" fill="url(#tabg)" />
<path d="M1714 306.5 V285.5 H1816.5 V306 H1862" fill="none" stroke="#9a9aa2" stroke-width="1.2" />
<rect x="1817.5" y="286.5" width="45" height="19" fill="#e6e6ec" />
<path d="M1817.2 286 V306" fill="none" stroke="#55555c" stroke-width="1" />
<path d="M1817 306.8 H1862" fill="none" stroke="#6a6a72" stroke-width="1.2" />
<text x="1765" y="299" font-size="10.8" fill="#222" text-anchor="middle" textLength="21" lengthAdjust="spacingAndGlyphs" >Main</text>
<g filter="url(#ib)">
<g transform="translate(1716.5 311.5) scale(1.0)"><path d="M6 5L24 2L22 14L27 26L3 28L8 18Z" fill="#e4e428"/><rect x="5" y="6" width="9" height="11" fill="#a8a8c8" stroke="#667" stroke-width="1"/><path d="M7 9h5M7 12h5" stroke="#446" stroke-width="1"/><path d="M16 17l10 10M20 26h6v-6" stroke="#8a1040" stroke-width="2" fill="none"/></g>
<text x="1732.0" y="353.8" font-size="10.8" fill="#1a1a1a" text-anchor="middle" textLength="27" lengthAdjust="spacingAndGlyphs" >query</text>
<g transform="translate(1752 311.5) scale(1.0)"><rect x="0.5" y="0.5" width="4" height="4" fill="#eee" stroke="#777" stroke-width="0.8"/><path d="M2 29L28 3V29Z" fill="#8c8c94"/><path d="M2 29L28 2" stroke="#1a1a1a" stroke-width="2.2"/><path d="M4 27Q3 12 10 6T20 5" stroke="#2a7a3a" stroke-width="2.4" fill="none" stroke-dasharray="2.5 1.2"/><path d="M9 20Q14 10 20 8L12 22Z" fill="#f4f4f4"/><path d="M18 12Q24 16 25 28" stroke="#33338a" stroke-width="1.2" fill="none"/></g>
<text x="1767.5" y="353.8" font-size="10.8" fill="#1a1a1a" text-anchor="middle" textLength="35" lengthAdjust="spacingAndGlyphs" >crv_plot</text>
<g transform="translate(1787.5 311.5) scale(1.0)"><rect x="0.5" y="0.5" width="4" height="4" fill="#eee" stroke="#777" stroke-width="0.8"/><path d="M4 18L20 26L28 18L14 10Z" fill="#1d6fd8"/><path d="M3 6L14 3L24 12L12 20Z" fill="#2a88ee"/><path d="M9 5Q16 2 22 10L16 17Q14 10 9 5Z" fill="#16a83c"/><path d="M5 19L19 27" stroke="#444" stroke-width="2"/></g>
<text x="1803.0" y="353.8" font-size="10.8" fill="#1a1a1a" text-anchor="middle" textLength="28.5" lengthAdjust="spacingAndGlyphs" >contin</text>
<g transform="translate(1823 311.5) scale(1.0)"><rect x="0.5" y="0.5" width="4" height="4" fill="#eee" stroke="#777" stroke-width="0.8"/><path d="M5 8L14 3L24 17L14 23Z" fill="#9c9cb4" stroke="#444" stroke-width="1.2"/><path d="M8 9L13 6L19 15L14 18Z" fill="#d8d8e8"/><path d="M16 12L30 24L26 30L20 24L17 26Z" fill="#e81c20"/><circle cx="8" cy="5" r="2.5" fill="#bbc" stroke="#667" stroke-width="0.8"/></g>
<text x="1838.5" y="353.8" font-size="10.8" fill="#1a1a1a" text-anchor="middle" textLength="27" lengthAdjust="spacingAndGlyphs" >paste</text>
</g>
<g filter="url(#ib)">
<g transform="translate(1716.5 360.2) scale(1.0)"><rect x="0.5" y="0.5" width="4" height="4" fill="#eee" stroke="#777" stroke-width="0.8"/><path d="M19 3.5h8M24 1l3.5 2.5l-3.5 2.5" fill="none" stroke="#222" stroke-width="1.6"/><path d="M20 3.5h6" stroke="#e8c820" stroke-width="0.8"/><ellipse cx="13" cy="25" rx="12" ry="4" fill="#888" opacity="0.6"/><circle cx="15" cy="17" r="11.5" fill="#1a7ae4"/><circle cx="18.5" cy="13" r="5" fill="#3aa6ff"/><circle cx="20" cy="12" r="2" fill="#8ad8ff"/></g>
<text x="1732.0" y="402.5" font-size="10.8" fill="#1a1a1a" text-anchor="middle" textLength="32" lengthAdjust="spacingAndGlyphs" >sphere</text>
<g transform="translate(1752 360.2) scale(1.0)"><path d="M4 8Q15 -2 27 9L29 6L28 15L20 12L24 10Q15 3 7 11Z" fill="#d8202c"/><path d="M26 22Q15 32 3 21L1 24L2 15L10 18L6 20Q15 27 23 19Z" fill="#d8202c"/><ellipse cx="15" cy="15" rx="6" ry="9.5" fill="none" stroke="#0a0a0a" stroke-width="4.4"/></g>
<text x="1767.5" y="402.5" font-size="10.8" fill="#1a1a1a" text-anchor="middle" textLength="20.5" lengthAdjust="spacingAndGlyphs" >zero</text>
<g transform="translate(1787.5 360.2) scale(1.0)"><rect x="0.5" y="0.5" width="4" height="4" fill="#eee" stroke="#777" stroke-width="0.8"/><path d="M19 3.5h8M24 1l3.5 2.5l-3.5 2.5" fill="none" stroke="#222" stroke-width="1.6"/><path d="M20 3.5h6" stroke="#e8c820" stroke-width="0.8"/><path d="M2 8L12 4L18 8L14 18L4 16Z" fill="#2a8cee"/><path d="M8 10L16 8L14 14L9 15Z" fill="#5ab4ff"/><ellipse cx="20" cy="20" rx="9" ry="7.5" fill="#0c7a20"/><ellipse cx="18" cy="21" rx="4" ry="4.5" fill="#053a0c"/><path d="M24 12L29 16L26 24Z" fill="#18a030"/></g>
<text x="1803.0" y="402.5" font-size="10.8" fill="#1a1a1a" text-anchor="middle" textLength="35" lengthAdjust="spacingAndGlyphs" >x_mirro</text>
<g transform="translate(1823 360.2) scale(1.0)"><rect x="0.5" y="0.5" width="4" height="4" fill="#eee" stroke="#777" stroke-width="0.8"/><path d="M19 3.5h8M24 1l3.5 2.5l-3.5 2.5" fill="none" stroke="#222" stroke-width="1.6"/><path d="M20 3.5h6" stroke="#e8c820" stroke-width="0.8"/><path d="M3 12Q10 2 20 6L16 10Q10 9 7 15Z" fill="#d8202c"/><path d="M27 10L24 22L20 18Z" fill="#d8202c"/><path d="M9 28L13 10H19L24 28H19L18 23H14L13 28Z" fill="#1a58c8"/><path d="M2 22L10 18L14 26L6 29Z" fill="#2a7ae0"/><path d="M15 14v6h3v-6z" fill="#0a0a30"/><path d="M14 30L16 22L18 30Z" fill="#d8202c"/></g>
<text x="1838.5" y="402.5" font-size="10.8" fill="#1a1a1a" text-anchor="middle" textLength="29" lengthAdjust="spacingAndGlyphs" >xtract</text>
</g>
<rect x="1713.5" y="408.5" width="103" height="21.5" fill="url(#tabg)" />
<path d="M1714 430.0 V409.0 H1816.5 V429.5 H1862" fill="none" stroke="#9a9aa2" stroke-width="1.2" />
<rect x="1817.5" y="410.0" width="45" height="19" fill="#e6e6ec" />
<path d="M1817.2 409.5 V429.5" fill="none" stroke="#55555c" stroke-width="1" />
<path d="M1817 430.3 H1862" fill="none" stroke="#6a6a72" stroke-width="1.2" />
<text x="1765" y="422.5" font-size="10.8" fill="#222" text-anchor="middle" textLength="41" lengthAdjust="spacingAndGlyphs" >Windows</text>
<g filter="url(#ib)">
<g transform="translate(1716.5 435.0) scale(1.0)"><path d="M3 10L12 6L22 9L24 18L14 24L4 20Z" fill="#2e3238"/><circle cx="8" cy="8" r="4" fill="#3a3e46"/><circle cx="16" cy="6" r="3.5" fill="#30343a"/><path d="M22 11L29 8V18L22 16Z" fill="#22262c"/><path d="M8 14L16 12L18 18L10 20Z" fill="#4a5460"/></g>
<text x="1732.0" y="477.3" font-size="10.8" fill="#1a1a1a" text-anchor="middle" textLength="17" lengthAdjust="spacingAndGlyphs" >new</text>
<g transform="translate(1752 435.0) scale(1.0)"><rect x="3" y="2" width="22" height="22" fill="#e8e8ee" opacity="0.7"/><circle cx="14" cy="12" r="9" fill="#2a80e8"/><path d="M6 14Q10 8 16 14Q18 20 12 21Q7 19 6 14Z" fill="#c82030"/><path d="M12 4Q18 5 21 10Q16 8 12 4Z" fill="#6ab8ff"/><path d="M22 22L29 19L27 27Z" fill="#e02020"/><path d="M20 27L26 22" stroke="#e02020" stroke-width="2"/></g>
<text x="1767.5" y="477.3" font-size="10.8" fill="#1a1a1a" text-anchor="middle" textLength="14.5" lengthAdjust="spacingAndGlyphs" >clip</text>
<g transform="translate(1787.5 435.0) scale(1.0)"><rect x="2" y="2" width="26" height="27" fill="#9a9690" stroke="#4a4238" stroke-width="2.2"/><path d="M15 2V29M2 12H28M2 21H28M9 2V12M21 12V21" stroke="#4a4238" stroke-width="2"/><path d="M16 11L26 4V11Z" fill="#c8c8c8"/><path d="M4 20L13 13V20Z" fill="#b8b4a8"/></g>
<text x="1803.0" y="477.3" font-size="10.8" fill="#1a1a1a" text-anchor="middle" textLength="22" lengthAdjust="spacingAndGlyphs" >sync</text>
<g transform="translate(1823 435.0) scale(1.0)"><rect x="2" y="2" width="27" height="27" fill="#f0f0f0" stroke="#777" stroke-width="1"/><path d="M11 2V23M20 2V23M6 9H29M6 16H29" stroke="#777" stroke-width="1"/><rect x="2" y="2" width="4.5" height="27" fill="#3a8ad0"/><path d="M2 6h4.5M2 10h4.5M2 14h4.5M2 18h4.5" stroke="#cfe" stroke-width="1"/><rect x="6.5" y="23" width="22.5" height="6" fill="#222"/><path d="M9 26h18" stroke="#d8c820" stroke-width="2.6" stroke-dasharray="3.2 2.4"/></g>
<text x="1838.5" y="477.3" font-size="10.8" fill="#1a1a1a" text-anchor="middle" textLength="30" lengthAdjust="spacingAndGlyphs" >layout</text>
</g>
<g filter="url(#ib)">
<g transform="translate(1716.5 483.7) scale(1.0)"><rect x="0.5" y="0.5" width="4" height="4" fill="#eee" stroke="#777" stroke-width="0.8"/><path d="M3 29L29 3V29Z" fill="#9a9aa0"/><circle cx="14.5" cy="15.5" r="11" fill="none" stroke="#1a2050" stroke-width="2.2"/><path d="M5 25L26 5" stroke="#333" stroke-width="1.4"/><path d="M8 22L22 9L24 12L11 24Z" fill="#d8d8d8"/></g>
<text x="1732.0" y="526.0" font-size="10.8" fill="#1a1a1a" text-anchor="middle" textLength="35.5" lengthAdjust="spacingAndGlyphs" >al smoot</text>
<g transform="translate(1752 483.7) scale(1.0)"><rect x="0.5" y="0.5" width="4" height="4" fill="#eee" stroke="#777" stroke-width="0.8"/><path d="M5 2V29M13 2V29M21 2V29M28 2V29M2 7H30M2 14H30M2 27H30" stroke="#8a8a90" stroke-width="1.2"/><path d="M3 20.5H28" stroke="#d82030" stroke-width="2"/><path d="M3 20.5l5 -3.5v7zM28 20.5l-5 -3.5v7zM14 20.5l4 -3v6z" fill="#d82030"/></g>
<text x="1767.5" y="526.0" font-size="10.8" fill="#1a1a1a" text-anchor="middle" textLength="15.5" lengthAdjust="spacingAndGlyphs" >grid</text>
<g transform="translate(1787.5 483.7) scale(1.0)"><rect x="1" y="1" width="28" height="28" fill="#f0f0e4"/><path d="M2 28V20Q14 16 28 4V28Z" fill="#5a5a5a"/><path d="M4 20Q16 16 28 3" stroke="#e03020" stroke-width="2.2" fill="none"/><path d="M8 22L28 14V20L8 25Z" fill="#20a040"/><path d="M12 25H28V29H12Z" fill="#2040d0"/><path d="M2 24L10 22V29H2Z" fill="#303030"/></g>
<text x="1803.0" y="526.0" font-size="10.8" fill="#1a1a1a" text-anchor="middle" textLength="33" lengthAdjust="spacingAndGlyphs" >usr cls</text>
<g transform="translate(1823 483.7) scale(1.0)"><rect x="2" y="2" width="12" height="10" fill="#f4f4f4" stroke="#555" stroke-width="1"/><rect x="2" y="2" width="12" height="2.6" fill="#777"/><path d="M17 4L28 2V12L18 13Z" fill="#2a2e34"/><path d="M10 8L20 16M20 16V10M20 16H14" stroke="#e02020" stroke-width="2.4" fill="none"/><path d="M6 21L18 16L29 20L18 29Z" fill="#2a8a48"/><path d="M6 21L18 29V26L8 19Z" fill="#14502a"/><path d="M16 18l4 4l-4 4" stroke="#e02020" stroke-width="2" fill="none"/></g>
<text x="1838.5" y="526.0" font-size="10.8" fill="#1a1a1a" text-anchor="middle" textLength="34" lengthAdjust="spacingAndGlyphs" >x_wind</text>
</g>
<rect x="1713.5" y="531.5" width="103" height="21.5" fill="url(#tabg)" />
<path d="M1714 553.0 V532.0 H1816.5 V552.5 H1862" fill="none" stroke="#9a9aa2" stroke-width="1.2" />
<rect x="1817.5" y="533.0" width="45" height="19" fill="#e6e6ec" />
<path d="M1817.2 532.5 V552.5" fill="none" stroke="#55555c" stroke-width="1" />
<path d="M1817 553.3 H1862" fill="none" stroke="#6a6a72" stroke-width="1.2" />
<text x="1765" y="545.5" font-size="10.8" fill="#222" text-anchor="middle" textLength="29.5" lengthAdjust="spacingAndGlyphs" >Layers</text>
<g filter="url(#ib)">
<g transform="translate(1716.5 558.0) scale(1.0)"><rect x="0.5" y="0.5" width="4" height="4" fill="#eee" stroke="#777" stroke-width="0.8"/><path d="M3 9L22 4L28 9L9 14Z" fill="#d8d8dc" stroke="#333" stroke-width="1.2"/><path d="M3 16L22 11L28 16L9 21Z" fill="#e8e8ec" stroke="#555" stroke-width="1"/><path d="M3 22L22 17L28 22L9 28Z" fill="#c8c8cc" stroke="#222" stroke-width="1.4"/></g>
<text x="1732.0" y="600.3" font-size="10.8" fill="#1a1a1a" text-anchor="middle" textLength="17" lengthAdjust="spacingAndGlyphs" >new</text>
<g transform="translate(1752 558.0) scale(1.0)"><path d="M8 2l8 7M16 2l-8 7M10 8l8 6M18 8l-8 6" stroke="#2a7ad8" stroke-width="2.6"/><path d="M6 18L24 15L28 20V28H8L6 24Z" fill="#3a3a40"/><path d="M8 20H26" stroke="#e8e8e8" stroke-width="1.6"/><path d="M10 23h3M15 23h3M20 23h3" stroke="#ccc" stroke-width="2"/></g>
<text x="1767.5" y="600.3" font-size="10.8" fill="#1a1a1a" text-anchor="middle" textLength="33.5" lengthAdjust="spacingAndGlyphs" >unused</text>
<g transform="translate(1787.5 558.0) scale(1.0)"><path d="M3 20L20 16L29 22L12 28Z" fill="#d0d0d4" stroke="#555" stroke-width="1"/><path d="M8 3V16" stroke="#d02030" stroke-width="2.4"/><path d="M3 17Q8 13 13 17L8 21Z" fill="#d02030"/><path d="M16 2L19 8H17.2V14H14.8V8H13Z" fill="#1a2aa8"/><circle cx="20" cy="16" r="5.5" fill="#20a048"/><path d="M16 14Q20 10 25 14" stroke="#2a6ad0" stroke-width="2" fill="none"/></g>
<text x="1803.0" y="600.3" font-size="10.8" fill="#1a1a1a" text-anchor="middle" textLength="34.5" lengthAdjust="spacingAndGlyphs" >sym_pl</text>
<g transform="translate(1823 558.0) scale(1.0)"><rect x="0.5" y="0.5" width="4" height="4" fill="#eee" stroke="#777" stroke-width="0.8"/><path d="M4 14L16 8L28 14L14 24Z" fill="#1a9a40"/><path d="M10 6L16 2L20 8L14 12Z" fill="#2a7ae0"/><path d="M18 10L28 6L29 12L22 16Z" fill="#2a80e8"/><path d="M6 20L14 26L28 18" stroke="#333" stroke-width="1.4" fill="none"/><path d="M22 20L28 24" stroke="#2a7ae0" stroke-width="2.4"/></g>
<text x="1838.5" y="600.3" font-size="10.8" fill="#1a1a1a" text-anchor="middle" textLength="34.5" lengthAdjust="spacingAndGlyphs" >sym_ge</text>
</g>
<rect x="1713.5" y="606.5" width="103" height="21.5" fill="url(#tabg)" />
<path d="M1714 628.0 V607.0 H1816.5 V627.5 H1862" fill="none" stroke="#9a9aa2" stroke-width="1.2" />
<rect x="1817.5" y="608.0" width="45" height="19" fill="#e6e6ec" />
<path d="M1817.2 607.5 V627.5" fill="none" stroke="#55555c" stroke-width="1" />
<path d="M1817 628.3 H1862" fill="none" stroke="#6a6a72" stroke-width="1.2" />
<text x="1765" y="620.5" font-size="10.8" fill="#222" text-anchor="middle" textLength="33" lengthAdjust="spacingAndGlyphs" >Special</text>
<g filter="url(#ib)">
<g transform="translate(1716.5 633.0) scale(1.0)"><rect x="0.5" y="0.5" width="4" height="4" fill="#eee" stroke="#777" stroke-width="0.8"/><path d="M5 4L26 2L28 16L8 18Z" fill="#2a7ad8"/><path d="M5 4L8 18L5 20L3 8Z" fill="#0a4a9a"/><text x="3" y="15.5" font-size="11.5" font-weight="bold" fill="#0a0a14" textLength="25" lengthAdjust="spacingAndGlyphs">local</text><g transform="translate(6 18) rotate(29.7)"><path d="M0 -1.7 H10.0 V-4.59 L16.1 0 L10.0 4.59 V1.7 H0Z" fill="#e0202a"/></g></g>
<text x="1732.0" y="675.3" font-size="10.8" fill="#1a1a1a" text-anchor="middle" textLength="25" lengthAdjust="spacingAndGlyphs" >move</text>
<g transform="translate(1752 633.0) scale(1.0)"><rect x="0.5" y="0.5" width="4" height="4" fill="#eee" stroke="#777" stroke-width="0.8"/><path d="M6 12L24 8L28 24L12 28Z" fill="#2a80dc"/><path d="M10 4Q22 0 28 12L24 14Q20 6 12 8Z" fill="#d8202c"/><path d="M22 14L30 12L28 20Z" fill="#d8202c"/><text x="3" y="24" font-size="11.5" font-weight="bold" fill="#0a0a14" textLength="25" lengthAdjust="spacingAndGlyphs">local</text></g>
<text x="1767.5" y="675.3" font-size="10.8" fill="#1a1a1a" text-anchor="middle" textLength="13.5" lengthAdjust="spacingAndGlyphs" >rot</text>
<g transform="translate(1787.5 633.0) scale(1.0)"><path d="M5 8L22 3L26 22L4 25Z" fill="#f4f4f8" stroke="#9a9ab8" stroke-width="1.2"/><path d="M4 25L26 22" stroke="#3a3ad0" stroke-width="1.6"/><g transform="translate(12 4) rotate(45.0)"><path d="M0 -1.6 H12.6 V-4.32 L18.4 0 L12.6 4.32 V1.6 H0Z" fill="#e0202a"/></g><rect x="23" y="19" width="4.5" height="4.5" fill="#2a4ad0"/></g>
<text x="1803.0" y="675.3" font-size="10.8" fill="#1a1a1a" text-anchor="middle" textLength="21" lengthAdjust="spacingAndGlyphs" >drag</text>
<g transform="translate(1823 633.0) scale(1.0)"><rect x="0.5" y="0.5" width="4" height="4" fill="#eee" stroke="#777" stroke-width="0.8"/><path d="M19 3.5h8M24 1l3.5 2.5l-3.5 2.5" fill="none" stroke="#222" stroke-width="1.6"/><path d="M20 3.5h6" stroke="#e8c820" stroke-width="0.8"/><text x="5" y="15" font-size="13" font-weight="bold" fill="#101018" textLength="20" lengthAdjust="spacingAndGlyphs">obj</text><path d="M4 16Q10 28 24 22L25 26L29 18L20 17L22 20Q12 24 8 15Z" fill="#d8202c"/><path d="M12 4l6 -3" stroke="#2a2ad0" stroke-width="1.2"/></g>
<text x="1838.5" y="675.3" font-size="10.8" fill="#1a1a1a" text-anchor="middle" textLength="35" lengthAdjust="spacingAndGlyphs" >lcl axes</text>
</g>
<g filter="url(#ib)">
<g transform="translate(1716.5 681.7) scale(1.0)"><rect x="0.5" y="0.5" width="4" height="4" fill="#eee" stroke="#777" stroke-width="0.8"/><path d="M5 10L20 5L27 9L12 15ZM5 10V22L12 28V15M12 28L27 21V9" fill="none" stroke="#6a4aa8" stroke-width="1.5"/><rect x="11" y="13" width="9" height="6" fill="#28b078"/></g>
<text x="1732.0" y="724.0" font-size="10.8" fill="#1a1a1a" text-anchor="middle" textLength="27" lengthAdjust="spacingAndGlyphs" >c_pvt</text>
<g transform="translate(1752 681.7) scale(1.0)"><rect x="0.5" y="0.5" width="4" height="4" fill="#eee" stroke="#777" stroke-width="0.8"/><ellipse cx="10" cy="9" rx="9" ry="6.5" transform="rotate(25 10 9)" fill="#2a88ec"/><ellipse cx="8" cy="7" rx="4" ry="2.5" transform="rotate(25 8 7)" fill="#7ac4ff"/><path d="M16 14L22 18" stroke="#2a9a5a" stroke-width="3"/><g transform="translate(14 18) rotate(33.7)"><path d="M0 -1.5 H12.6 V-4.050000000000001 L18.0 0 L12.6 4.050000000000001 V1.5 H0Z" fill="#e0202a"/></g><path d="M22 12l5 5M27 12l-5 5" stroke="#c84040" stroke-width="1.4"/></g>
<text x="1767.5" y="724.0" font-size="10.8" fill="#1a1a1a" text-anchor="middle" textLength="34.5" lengthAdjust="spacingAndGlyphs" >v_norm</text>
<g transform="translate(1787.5 681.7) scale(1.0)"><rect x="3" y="2" width="5" height="5" fill="none" stroke="#c02030" stroke-width="1.5"/><path d="M13 2v5h4v-5" fill="none" stroke="#8a6a20" stroke-width="1.4"/><path d="M3 10l6 5M9 10l-6 5" stroke="#c02030" stroke-width="1.6"/><path d="M14 10L24 20M24 10L14 20" stroke="#d8b820" stroke-width="3.6"/><path d="M16 13l6 4M22 13l-6 4" stroke="#8a7a20" stroke-width="1.2"/><g transform="translate(3 19) rotate(32.7)"><path d="M0 -1.8 H10.2 V-4.86 L16.6 0 L10.2 4.86 V1.8 H0Z" fill="#e0202a"/></g></g>
<text x="1803.0" y="724.0" font-size="10.8" fill="#1a1a1a" text-anchor="middle" textLength="34.5" lengthAdjust="spacingAndGlyphs" >slidecv</text>
<g transform="translate(1823 681.7) scale(1.0)"><rect x="0.5" y="0.5" width="4" height="4" fill="#eee" stroke="#777" stroke-width="0.8"/><path d="M4 8L20 4L28 14L24 26L6 24Z" fill="#2a7ad8"/><path d="M3 4L28 27M28 3L4 28" stroke="#d8202c" stroke-width="3.2"/><text x="10" y="20" font-size="12.5" font-weight="bold" fill="#0a0a10" textLength="15" lengthAdjust="spacingAndGlyphs">all</text></g>
<text x="1838.5" y="724.0" font-size="10.8" fill="#1a1a1a" text-anchor="middle" textLength="30" lengthAdjust="spacingAndGlyphs" >untrim</text>
</g>
<rect x="1713.5" y="729.5" width="103" height="21.5" fill="url(#tabg)" />
<path d="M1714 751.0 V730.0 H1816.5 V750.5 H1862" fill="none" stroke="#9a9aa2" stroke-width="1.2" />
<rect x="1817.5" y="731.0" width="45" height="19" fill="#e6e6ec" />
<path d="M1817.2 730.5 V750.5" fill="none" stroke="#55555c" stroke-width="1" />
<path d="M1817 751.3 H1862" fill="none" stroke="#6a6a72" stroke-width="1.2" />
<text x="1765" y="743.5" font-size="10.8" fill="#222" text-anchor="middle" textLength="60" lengthAdjust="spacingAndGlyphs" >Create_COS</text>
<g filter="url(#ib)">
<g transform="translate(1716.5 756.0) scale(1.0)"><rect x="0.5" y="0.5" width="4" height="4" fill="#eee" stroke="#777" stroke-width="0.8"/><path d="M19 3.5h8M24 1l3.5 2.5l-3.5 2.5" fill="none" stroke="#222" stroke-width="1.6"/><path d="M20 3.5h6" stroke="#e8c820" stroke-width="0.8"/><path d="M2 10L16 4L28 14L22 24L4 28Z" fill="#1f76dc"/><path d="M6 8Q14 2 24 12L18 16Q12 10 6 8Z" fill="#4a9ef4"/><path d="M14 14L26 20L22 24Z" fill="#0b50b0"/><path d="M19 3.5h8" stroke="#e8c820" stroke-width="2.4"/></g>
<text x="1732.0" y="798.3" font-size="10.8" fill="#1a1a1a" text-anchor="middle" textLength="34" lengthAdjust="spacingAndGlyphs" >project</text>
<g transform="translate(1752 756.0) scale(1.0)"><rect x="0.5" y="0.5" width="4" height="4" fill="#eee" stroke="#777" stroke-width="0.8"/><path d="M19 3.5h8M24 1l3.5 2.5l-3.5 2.5" fill="none" stroke="#222" stroke-width="1.6"/><path d="M20 3.5h6" stroke="#e8c820" stroke-width="0.8"/><path d="M3 8L18 4L28 10L26 20L6 22Z" fill="#1f76dc"/><path d="M8 6Q16 4 24 10L20 14Q12 12 8 6Z" fill="#0a3a80"/><text x="2" y="27" font-size="12.5" font-weight="bold" fill="#d82434" textLength="26" lengthAdjust="spacingAndGlyphs">both</text></g>
<text x="1767.5" y="798.3" font-size="10.8" fill="#1a1a1a" text-anchor="middle" textLength="22" lengthAdjust="spacingAndGlyphs" >isect</text>
<g transform="translate(1787.5 756.0) scale(1.0)"><rect x="0.5" y="0.5" width="4" height="4" fill="#eee" stroke="#777" stroke-width="0.8"/><path d="M3 12L18 5L29 14L16 26Z" fill="#1f7ae0"/><path d="M6 12L18 7L24 12L14 18Z" fill="#4aa0f4"/><path d="M16 26L29 14V18L17 29Z" fill="#0a4a9a"/><path d="M18 14L28 12L24 18Z" fill="#cfd8e0"/></g>
<text x="1803.0" y="798.3" font-size="10.8" fill="#1a1a1a" text-anchor="middle" textLength="16.5" lengthAdjust="spacingAndGlyphs" >cos</text>
<g transform="translate(1823 756.0) scale(1.0)"><rect x="0.5" y="0.5" width="4" height="4" fill="#eee" stroke="#777" stroke-width="0.8"/><path d="M4 6L12 4L13 16L22 12L27 16L22 28L8 26Z" fill="#1f72d8"/><path d="M12 4L16 6L15 14L13 16Z" fill="#0a3a84"/><path d="M13 16L22 12L24 16L15 20Z" fill="#0a3a84"/><rect x="0.5" y="22" width="4" height="4" fill="#ddd" stroke="#777" stroke-width="0.8"/></g>
<text x="1838.5" y="798.3" font-size="10.8" fill="#1a1a1a" text-anchor="middle" textLength="35" lengthAdjust="spacingAndGlyphs" >bl_isect</text>
</g>
<rect x="1713.5" y="804.5" width="103" height="21.5" fill="url(#tabg)" />
<path d="M1714 826.0 V805.0 H1816.5 V825.5 H1862" fill="none" stroke="#9a9aa2" stroke-width="1.2" />
<rect x="1817.5" y="806.0" width="45" height="19" fill="#e6e6ec" />
<path d="M1817.2 805.5 V825.5" fill="none" stroke="#55555c" stroke-width="1" />
<path d="M1817 826.3 H1862" fill="none" stroke="#6a6a72" stroke-width="1.2" />
<text x="1765" y="818.5" font-size="10.8" fill="#222" text-anchor="middle" textLength="20" lengthAdjust="spacingAndGlyphs" >Mod</text>
<g filter="url(#ib)">
<g transform="translate(1716.5 831.0) scale(1.0)"><rect x="0.5" y="0.5" width="4" height="4" fill="#eee" stroke="#777" stroke-width="0.8"/><path d="M3 22Q4 10 18 3L28 6Q26 18 22 28Q12 30 3 22Z" fill="#1f7ae0"/><path d="M3 22Q4 10 18 3L20 5Q10 14 12 26Q6 26 3 22Z" fill="#0a6a1c"/><path d="M12 26Q10 14 20 5L23 6Q15 16 17 28Z" fill="#1a9a30"/></g>
<text x="1732.0" y="873.3" font-size="10.8" fill="#1a1a1a" text-anchor="middle" textLength="33.5" lengthAdjust="spacingAndGlyphs" >extend</text>
<g transform="translate(1752 831.0) scale(1.0)"><rect x="0.5" y="0.5" width="4" height="4" fill="#eee" stroke="#777" stroke-width="0.8"/><path d="M3 20L10 4L28 3L26 22L16 29Z" fill="#2a90e8"/><path d="M3 20L10 4L16 6L10 24Z" fill="#a8d0f0"/><path d="M14 12L22 10L22 24L16 29Z" fill="#2ab050"/><path d="M10 24L16 6" stroke="#e8f4ff" stroke-width="1.2"/></g>
<text x="1767.5" y="873.3" font-size="10.8" fill="#1a1a1a" text-anchor="middle" textLength="22" lengthAdjust="spacingAndGlyphs" >align</text>
<g transform="translate(1787.5 831.0) scale(1.0)"><rect x="0.5" y="0.5" width="4" height="4" fill="#eee" stroke="#777" stroke-width="0.8"/><path d="M2 22L14 4L29 2L20 24L6 28Z" fill="#1a8a9a"/><path d="M6 22L16 6M10 24L20 6M14 25L24 5M18 25L27 5" stroke="#2ab8a8" stroke-width="1.6"/><path d="M2 22L6 28L20 24" stroke="#0a5a6a" stroke-width="1.6" fill="none"/></g>
<text x="1803.0" y="873.3" font-size="10.8" fill="#1a1a1a" text-anchor="middle" textLength="29" lengthAdjust="spacingAndGlyphs" >offset</text>
<g transform="translate(1823 831.0) scale(1.0)"><rect x="0.5" y="0.5" width="4" height="4" fill="#eee" stroke="#777" stroke-width="0.8"/><path d="M19 3.5h8M24 1l3.5 2.5l-3.5 2.5" fill="none" stroke="#222" stroke-width="1.6"/><path d="M20 3.5h6" stroke="#e8c820" stroke-width="0.8"/><path d="M4 8L22 5L28 14L24 24L6 22Z" fill="#1f7ae0"/><path d="M10 8L20 7L22 12L12 14Z" fill="#5ab0ff"/><path d="M3 8l6 -2" stroke="#333" stroke-width="1.6"/><text x="1" y="26" font-size="12.5" font-weight="bold" fill="#05050a" textLength="28" lengthAdjust="spacingAndGlyphs">blend</text></g>
<text x="1838.5" y="873.3" font-size="10.8" fill="#1a1a1a" text-anchor="middle" textLength="31" lengthAdjust="spacingAndGlyphs" >attach</text>
</g>
<rect x="1700" y="940.5" width="162" height="4.5" fill="#e8e8ee" />
<path d="M1738 942H1826" fill="none" stroke="#c8c8d0" stroke-width="2.4" />
<path d="M1700 945.5H1862" fill="none" stroke="#9a9aa2" stroke-width="1" />
<rect x="1701.5" y="948" width="159.5" height="19" fill="#dedee4" stroke="#a4a4ac" stroke-width="1.3" />
<text x="1710" y="961.5" font-size="10.8" fill="#a6a6ae" textLength="77" lengthAdjust="spacingAndGlyphs" >0 picked objects</text>
<rect x="1701.5" y="970.5" width="159.5" height="17" fill="#e4e4ea" />
<path d="M1701.5 987.5V970.7H1861" fill="none" stroke="#4a4a52" stroke-width="1.6" />
<path d="M1701.5 988H1861" fill="none" stroke="#f6f6f8" stroke-width="1.5" />
<text x="1780.5" y="983" font-size="10.8" fill="#1a1a1a" text-anchor="middle" textLength="23" lengthAdjust="spacingAndGlyphs" >none</text>
<path d="M1700 996H1862" fill="none" stroke="#b8b8c0" stroke-width="1.2" />
<rect x="1700" y="1000" width="12.5" height="216" fill="#e8e8ee" />
<path d="M1712.8 1000V1216" fill="none" stroke="#8e8e96" stroke-width="1.6" />
<rect x="1713.6" y="1000" width="148.5" height="216" fill="#dfdfe5" />
<text x="1759.5" y="1022" font-size="10.8" fill="#b2b2ba" text-anchor="end" textLength="35" lengthAdjust="spacingAndGlyphs" >Degree</text>
<text x="1759.5" y="1044.5" font-size="10.8" fill="#b2b2ba" text-anchor="end" textLength="28" lengthAdjust="spacingAndGlyphs" >Spans</text>
<rect x="1763.5" y="1005" width="45" height="19" fill="#e2e2e8" stroke="#b6b6be" stroke-width="1.2" />
<rect x="1813.2" y="1005" width="44.5" height="19" fill="#e2e2e8" stroke="#b6b6be" stroke-width="1.2" />
<rect x="1763.5" y="1028.5" width="45" height="19" fill="#e2e2e8" stroke="#b6b6be" stroke-width="1.2" />
<rect x="1813.2" y="1028.5" width="44.5" height="19" fill="#e2e2e8" stroke="#b6b6be" stroke-width="1.2" />
<path d="M1720 1072h7.5M1723.7 1068.3v7.5" fill="none" stroke="#111" stroke-width="2.2" />
<path d="M1721.5 1073.5l2.2 3.2l2.2 -3.2z" fill="#111" />
<text x="1737.3" y="1076" font-size="10.8" fill="#1a1a1a" textLength="34" lengthAdjust="spacingAndGlyphs" >Display</text>
<path d="M1720 1097.8h7.5M1723.7 1094.1v7.5" fill="none" stroke="#111" stroke-width="2.2" />
<path d="M1721.5 1099.3l2.2 3.2l2.2 -3.2z" fill="#111" />
<text x="1737.3" y="1101.8" font-size="10.8" fill="#1a1a1a" textLength="89" lengthAdjust="spacingAndGlyphs" >Diagnostic Shading</text>
<path d="M1720 1123.9h7.5M1723.7 1120.2v7.5" fill="none" stroke="#111" stroke-width="2.2" />
<path d="M1721.5 1125.4l2.2 3.2l2.2 -3.2z" fill="#111" />
<text x="1737.3" y="1127.9" font-size="10.8" fill="#1a1a1a" textLength="102.5" lengthAdjust="spacingAndGlyphs" >Cross Section Control</text>
<path d="M1700 1216.5H1862" fill="none" stroke="#f4f4f8" stroke-width="1.4" />
<path d="M1700 1222H1862" fill="none" stroke="#a8a8b0" stroke-width="1.1" />
<rect x="1700" y="1222.5" width="162" height="51" fill="#e4e4ea" />
<path d="M1712.8 1223V1273" fill="none" stroke="#c4c4cc" stroke-width="1.2" />
<g filter="url(#ib)">
<g transform="translate(1717.0 1226) scale(1.0)"><rect x="3" y="2" width="5" height="5" fill="none" stroke="#c02030" stroke-width="1.5"/><path d="M13 2v5h4v-5" fill="none" stroke="#8a6a20" stroke-width="1.4"/><path d="M3 10l6 5M9 10l-6 5" stroke="#c02030" stroke-width="1.6"/><path d="M14 10L24 20M24 10L14 20" stroke="#d8b820" stroke-width="3.6"/><path d="M16 13l6 4M22 13l-6 4" stroke="#8a7a20" stroke-width="1.2"/><g transform="translate(3 19) rotate(32.7)"><path d="M0 -1.8 H10.2 V-4.86 L16.6 0 L10.2 4.86 V1.8 H0Z" fill="#e0202a"/></g></g>
<g transform="translate(1752.6 1226) scale(1.0)"><path d="M4 28Q6 8 22 4L28 12Q26 22 22 28Z" fill="#1f7ae0"/><path d="M10 28Q12 12 24 6M16 28Q18 16 27 10" stroke="#5ac8ff" stroke-width="1.6" fill="none"/><path d="M4 8L20 24M20 8L6 22" stroke="#2a2ab0" stroke-width="1.6"/><text x="2" y="6" font-size="7.5" font-weight="bold" fill="#2a2ad0" textLength="13" lengthAdjust="spacingAndGlyphs">min</text><text x="14" y="29.5" font-size="7.5" font-weight="bold" fill="#d82434" textLength="14" lengthAdjust="spacingAndGlyphs">max</text><path d="M3 28L14 29L10 24Z" fill="#0a6a4a"/></g>
<g transform="translate(1788.2 1226) scale(1.0)"><path d="M3 28Q4 8 15 8Q26 8 27 28H21Q21 14 15 14Q9 14 9 28Z" fill="#2a8a5a"/><path d="M6 26Q7 11 15 11Q23 11 24 26" stroke="#0a3a20" stroke-width="1.4" fill="none" stroke-dasharray="2.4 2"/><path d="M5 8L12 3M12 3L20 3M20 3L26 9" stroke="#444" stroke-width="1.2"/><text x="2" y="6" font-size="7.5" font-weight="bold" fill="#2a2ad0" textLength="13" lengthAdjust="spacingAndGlyphs">min</text><text x="15" y="29.5" font-size="7.5" font-weight="bold" fill="#d82434" textLength="14" lengthAdjust="spacingAndGlyphs">max</text></g>
</g>
<text x="1712.5" y="1269" font-size="10.8" fill="#1a1a1a" textLength="104" lengthAdjust="spacingAndGlyphs" >movecvscandev curva</text>
<path d="M1698 1274.5H1864" fill="none" stroke="#9a9aa2" stroke-width="1.2" />
</g>
</g>
<g id="shelf">
<g class="ui">
<defs><linearGradient id="shg" x1="0" y1="0" x2="1" y2="0"><stop offset="0" stop-color="#eaeaf0"/><stop offset="0.3" stop-color="#ffffff"/><stop offset="0.75" stop-color="#fafafc"/><stop offset="1" stop-color="#e2e2ea"/></linearGradient><linearGradient id="shv" x1="0" y1="0" x2="0" y2="1"><stop offset="0" stop-color="#d4d4de" stop-opacity="0.9"/><stop offset="0.35" stop-color="#ffffff" stop-opacity="0"/><stop offset="1" stop-color="#d8d8e0" stop-opacity="0.5"/></linearGradient></defs>
<rect x="274" y="1297" width="1592" height="109" fill="#e3e3e9" />
<rect x="274" y="1297" width="2.5" height="109" fill="#9c9ca4" />
<rect x="274" y="1403.5" width="1592" height="2" fill="#b4b4bc" />
<rect x="1864" y="1297" width="2" height="109" fill="#c0c0c8" />
<rect x="277" y="1299.5" width="1587" height="27" fill="url(#shg)" />
<rect x="277" y="1299.5" width="1587" height="27" fill="url(#shv)" />
<rect x="280" y="1305.5" width="16" height="15.5" fill="#1e6ab4" />
<path d="M283.5 1308.5l9 4.7l-9 4.7" fill="none" stroke="#eef4fa" stroke-width="2" />
<text x="300" y="1318.8" font-size="11.5" fill="#9c9ca6" textLength="45.5" lengthAdjust="spacingAndGlyphs" >Shelves</text>
<rect x="1792" y="1303.5" width="19.5" height="20.5" fill="#dcdce2" stroke="#f6f6f8" stroke-width="1.2" rx="2"/>
<path d="M1797 1319h6" fill="none" stroke="#a0a0a8" stroke-width="2" />
<rect x="1815.5" y="1303.5" width="19.5" height="20.5" fill="#dcdce2" stroke="#f6f6f8" stroke-width="1.2" rx="2"/>
<rect x="1821.0" y="1309" width="9" height="10" fill="none" stroke="#a8a8b0" stroke-width="1.4" />
<path d="M1821.0 1309.6h9" fill="none" stroke="#a0a0a8" stroke-width="2" />
<rect x="1838" y="1303.5" width="19.5" height="20.5" fill="#e9a9a4" stroke="#f0c4c0" stroke-width="1.2" rx="2"/>
<path d="M1842.8 1308l10 11M1852.8 1308l-10 11" fill="none" stroke="#fbeeee" stroke-width="2.2" />
<path d="M277 1327.2H1455" fill="none" stroke="#b0b0b8" stroke-width="1.3" />
<rect x="278" y="1328.5" width="1586" height="20" fill="#e4e4ea" />
<rect x="278" y="1329" width="13" height="74" fill="#dadae0" />
<path d="M291 1330V1402" fill="none" stroke="#aaaab2" stroke-width="1.2" />
<rect x="291.5" y="1330" width="103.0" height="19.5" fill="#fafafc" />
<path d="M291.5 1349V1330H394.5V1348.5" fill="none" stroke="#9c9ca4" stroke-width="1.2" />
<text x="343.0" y="1342.8" font-size="10.8" fill="#1a1a1a" text-anchor="middle" textLength="36.5" lengthAdjust="spacingAndGlyphs" >Concept</text>
<rect x="395.0" y="1331.5" width="102.5" height="16.5" fill="#dcdce2" />
<path d="M395.0 1348V1331.5H497.5V1348" fill="none" stroke="#8a8a92" stroke-width="1.2" />
<text x="446.25" y="1342.8" font-size="10.8" fill="#1a1a1a" text-anchor="middle" textLength="24.5" lengthAdjust="spacingAndGlyphs" >Paint</text>
<rect x="498.5" y="1331.5" width="102.5" height="16.5" fill="#dcdce2" />
<path d="M498.5 1348V1331.5H601.0V1348" fill="none" stroke="#8a8a92" stroke-width="1.2" />
<text x="549.75" y="1342.8" font-size="10.8" fill="#1a1a1a" text-anchor="middle" textLength="28" lengthAdjust="spacingAndGlyphs" >Curve</text>
<rect x="602.0" y="1331.5" width="102.5" height="16.5" fill="#dcdce2" />
<path d="M602.0 1348V1331.5H704.5V1348" fill="none" stroke="#8a8a92" stroke-width="1.2" />
<text x="653.25" y="1342.8" font-size="10.8" fill="#1a1a1a" text-anchor="middle" textLength="36" lengthAdjust="spacingAndGlyphs" >Surface</text>
<rect x="705.5" y="1331.5" width="102.5" height="16.5" fill="#dcdce2" />
<path d="M705.5 1348V1331.5H808.0V1348" fill="none" stroke="#8a8a92" stroke-width="1.2" />
<text x="756.75" y="1342.8" font-size="10.8" fill="#1a1a1a" text-anchor="middle" textLength="26.5" lengthAdjust="spacingAndGlyphs" >Blend</text>
<rect x="809.0" y="1331.5" width="102.5" height="16.5" fill="#dcdce2" />
<path d="M809.0 1348V1331.5H911.5V1348" fill="none" stroke="#8a8a92" stroke-width="1.2" />
<text x="860.25" y="1342.8" font-size="10.8" fill="#1a1a1a" text-anchor="middle" textLength="60.5" lengthAdjust="spacingAndGlyphs" >Construction</text>
<rect x="912.5" y="1331.5" width="102.5" height="16.5" fill="#dcdce2" />
<path d="M912.5 1348V1331.5H1015.0V1348" fill="none" stroke="#8a8a92" stroke-width="1.2" />
<text x="963.75" y="1342.8" font-size="10.8" fill="#1a1a1a" text-anchor="middle" textLength="75" lengthAdjust="spacingAndGlyphs" >Data_Exchange</text>
<rect x="1016.0" y="1331.5" width="102.0" height="16.5" fill="#dcdce2" />
<path d="M1016.0 1348V1331.5H1118.0V1348" fill="none" stroke="#8a8a92" stroke-width="1.2" />
<text x="1067.0" y="1342.8" font-size="10.8" fill="#1a1a1a" text-anchor="middle" textLength="34" lengthAdjust="spacingAndGlyphs" >Render</text>
<rect x="1119.0" y="1331.5" width="102.0" height="16.5" fill="#dcdce2" />
<path d="M1119.0 1348V1331.5H1221.0V1348" fill="none" stroke="#8a8a92" stroke-width="1.2" />
<text x="1170.0" y="1342.8" font-size="10.8" fill="#1a1a1a" text-anchor="middle" textLength="38.5" lengthAdjust="spacingAndGlyphs" >Animate</text>
<path d="M394.5 1348.6H1864" fill="none" stroke="#8a8a92" stroke-width="1.3" />
<rect x="292" y="1349.5" width="1572" height="53" fill="#e6e6ec" />
<g filter="url(#ib)">
<g transform="translate(293.8 1354) scale(1.0)"><path d="M5 9L8 29H22L25 9Z" fill="#4a4a4e"/><ellipse cx="15" cy="9" rx="11" ry="3.6" fill="#6a6a70" stroke="#2e2e32" stroke-width="1.4"/><path d="M10 12l1.5 15M15 12v15M20 12l-1.5 15" stroke="#2a2a2e" stroke-width="1.6"/><path d="M7 10L9 28" stroke="#8a8a90" stroke-width="1.2"/></g>
<text x="308.8" y="1397.5" font-size="10.8" fill="#1a1a1a" text-anchor="middle" textLength="27" lengthAdjust="spacingAndGlyphs" >Trash</text>
<g transform="translate(329.7 1354) scale(1.0)"><path d="M8 25L23 5" stroke="#2a3ad0" stroke-width="2"/><circle cx="8" cy="25" r="2.6" fill="#4a4ae0"/><circle cx="23" cy="5" r="2.6" fill="#4a4ae0"/></g>
<text x="344.7" y="1396.3" font-size="10.8" fill="#1a1a1a" text-anchor="middle" textLength="32.5" lengthAdjust="spacingAndGlyphs" >keyline</text>
<g transform="translate(365.3 1354) scale(1.0)"><rect x="0.5" y="0.5" width="4" height="4" fill="#eee" stroke="#777" stroke-width="0.8"/><path d="M3 22Q8 6 14 14T22 20" stroke="#2a3ab0" stroke-width="1.6" fill="none"/><path d="M14 22L24 6L29 9L19 25Z" fill="#e03020"/><path d="M24 6L27 2L30 5L29 9Z" fill="#f0d0b0"/><path d="M14 22l1 5l4 -2z" fill="#333"/><path d="M6 24Q12 28 20 26" stroke="#7a7a80" stroke-width="1.2" fill="none"/></g>
<text x="380.3" y="1396.3" font-size="10.8" fill="#1a1a1a" text-anchor="middle" textLength="30.5" lengthAdjust="spacingAndGlyphs" >sk_crv</text>
<g transform="translate(401 1354) scale(1.0)"><rect x="0.5" y="0.5" width="4" height="4" fill="#eee" stroke="#777" stroke-width="0.8"/><path d="M5 8Q22 4 18 13T8 24Q16 28 26 24" stroke="#2a3ab0" stroke-width="1.8" fill="none"/><path d="M4 7l4 3M8 7l-4 3M22 6l4 3M26 6l-4 3M5 23l4 3M9 23l-4 3M24 22l4 3M28 22l-4 3" stroke="#d82030" stroke-width="1.4"/><path d="M5 8L24 7L7 24L26 24" stroke="#8a8a9a" stroke-width="0.8" fill="none" stroke-dasharray="2 2"/></g>
<text x="416" y="1396.3" font-size="10.8" fill="#1a1a1a" text-anchor="middle" textLength="30" lengthAdjust="spacingAndGlyphs" >cv crv</text>
<g transform="translate(437 1354) scale(1.0)"><path d="M4 26L26 4" stroke="#2a3ad0" stroke-width="2"/><path d="M26 4l-6 1l5 5zM4 26l6 -1l-5 -5z" fill="#2a3ad0"/><path d="M8 10Q16 12 22 24" stroke="#6a6ab0" stroke-width="1.4" fill="none"/><circle cx="15" cy="15" r="2.2" fill="#4a4ae0"/></g>
<text x="452" y="1396.3" font-size="10.8" fill="#1a1a1a" text-anchor="middle" textLength="36" lengthAdjust="spacingAndGlyphs" >line tan</text>
<g transform="translate(472.5 1354) scale(1.0)"><rect x="0.5" y="0.5" width="4" height="4" fill="#eee" stroke="#777" stroke-width="0.8"/><path d="M4 16Q16 14 22 4" stroke="#2a3ab0" stroke-width="1.6" fill="none"/><path d="M22 4Q26 14 24 28" stroke="#2a3ab0" stroke-width="1.6" fill="none"/><path d="M14 12l4 -8l3 7" stroke="#7a7ac0" stroke-width="1.2" fill="none"/><path d="M22 2l2 5l-5 0z" fill="#8a8ad0"/></g>
<text x="487.5" y="1396.3" font-size="10.8" fill="#1a1a1a" text-anchor="middle" textLength="20.5" lengthAdjust="spacingAndGlyphs" >fillet</text>
<g transform="translate(508 1354) scale(1.0)"><rect x="0.5" y="0.5" width="4" height="4" fill="#eee" stroke="#777" stroke-width="0.8"/><circle cx="15" cy="16" r="10.5" fill="none" stroke="#2a2ab8" stroke-width="2"/></g>
<text x="523" y="1396.3" font-size="10.8" fill="#1a1a1a" text-anchor="middle" textLength="24" lengthAdjust="spacingAndGlyphs" >circle</text>
<g transform="translate(543.8 1354) scale(1.0)"><rect x="0.5" y="0.5" width="4" height="4" fill="#eee" stroke="#777" stroke-width="0.8"/><path d="M2 29L29 3V29Z" fill="#8c8c94"/><path d="M4 12Q10 2 20 6" stroke="#444" stroke-width="1.6" fill="none" stroke-dasharray="3 2"/><ellipse cx="17" cy="21" rx="8" ry="5.5" transform="rotate(-35 17 21)" fill="none" stroke="#3a3a4a" stroke-width="1.8"/></g>
<text x="558.8" y="1396.3" font-size="10.8" fill="#1a1a1a" text-anchor="middle" textLength="23.5" lengthAdjust="spacingAndGlyphs" >close</text>
<g transform="translate(579.5 1354) scale(1.0)"><rect x="0.5" y="0.5" width="4" height="4" fill="#eee" stroke="#777" stroke-width="0.8"/><path d="M3 24Q5 4 10 8T16 22T24 6" stroke="#5a5a64" stroke-width="2" fill="none"/><path d="M8 26Q10 6 15 10T21 24T29 8" stroke="#8a8a94" stroke-width="2" fill="none"/></g>
<text x="594.5" y="1396.3" font-size="10.8" fill="#1a1a1a" text-anchor="middle" textLength="20.5" lengthAdjust="spacingAndGlyphs" >dupl</text>
<g transform="translate(615.5 1354) scale(1.0)"><rect x="0.5" y="0.5" width="4" height="4" fill="#eee" stroke="#777" stroke-width="0.8"/><path d="M3 12Q14 8 28 22" stroke="#2a2ab0" stroke-width="1.6" fill="none"/><path d="M6 26Q16 18 26 4" stroke="#2a2ab0" stroke-width="1.6" fill="none"/><path d="M4 20Q14 14 28 14" stroke="#6a6ac0" stroke-width="1.3" fill="none"/><path d="M12 4l6 22" stroke="#8a8ac8" stroke-width="1.2" stroke-dasharray="2 2"/></g>
<text x="630.5" y="1396.3" font-size="10.8" fill="#1a1a1a" text-anchor="middle" textLength="33" lengthAdjust="spacingAndGlyphs" >crv sctn</text>
<g transform="translate(687 1354) scale(1.0)"><rect x="0.5" y="0.5" width="4" height="4" fill="#eee" stroke="#777" stroke-width="0.8"/><path d="M4 10Q10 4 20 6Q30 10 27 20Q22 27 14 24Q12 18 6 18Q2 14 4 10Z" fill="#1f80e8"/><path d="M8 9Q14 6 20 8Q24 10 24 14Q16 12 8 9Z" fill="#58b0ff"/><path d="M14 24Q22 27 27 20L27 23Q22 29 15 27Z" fill="#0a4a9c"/></g>
<text x="702" y="1396.3" font-size="10.8" fill="#1a1a1a" text-anchor="middle" textLength="29" lengthAdjust="spacingAndGlyphs" >planar</text>
<g transform="translate(722.6 1354) scale(1.0)"><rect x="0.5" y="0.5" width="4" height="4" fill="#eee" stroke="#777" stroke-width="0.8"/><path d="M6 6Q14 2 18 8Q20 14 16 20Q20 26 14 28Q6 26 8 18Q4 12 6 6Z" fill="#1f78e0"/><path d="M8 7Q13 5 15 9Q14 14 10 12Z" fill="#58b0ff"/><path d="M12 18Q16 22 13 27" stroke="#0a3a80" stroke-width="2" fill="none"/><path d="M23 12Q27 16 23 20T24 28" stroke="#333" stroke-width="1.3" fill="none"/></g>
<text x="737.6" y="1396.3" font-size="10.8" fill="#1a1a1a" text-anchor="middle" textLength="23.5" lengthAdjust="spacingAndGlyphs" >open</text>
<g transform="translate(758 1354) scale(1.0)"><rect x="0.5" y="0.5" width="4" height="4" fill="#eee" stroke="#777" stroke-width="0.8"/><path d="M5 8Q12 2 19 6Q22 12 18 18Q22 24 16 28Q6 28 6 20Q2 14 5 8Z" fill="#1a6cd0"/><path d="M8 8Q13 5 16 8Q15 13 10 12Z" fill="#4aa0f4"/><path d="M8 18Q14 16 18 20Q16 26 10 25Z" fill="#0a3a84"/><path d="M24 12Q28 16 24 20T25 28" stroke="#333" stroke-width="1.3" fill="none"/></g>
<text x="773" y="1396.3" font-size="10.8" fill="#1a1a1a" text-anchor="middle" textLength="30.5" lengthAdjust="spacingAndGlyphs" >closed</text>
<g transform="translate(793.8 1354) scale(1.0)"><rect x="0.5" y="0.5" width="4" height="4" fill="#eee" stroke="#777" stroke-width="0.8"/><path d="M4 5Q15 0 26 5Q24 14 17 16V22Q24 23 25 27Q15 31 5 27Q6 23 13 22V16Q6 14 4 5Z" fill="#1f78e0"/><ellipse cx="15" cy="5.5" rx="10" ry="3" fill="#0a4aa0"/><path d="M7 8Q10 13 14 14" stroke="#6ac0ff" stroke-width="1.6" fill="none"/></g>
<text x="808.8" y="1396.3" font-size="10.8" fill="#1a1a1a" text-anchor="middle" textLength="34" lengthAdjust="spacingAndGlyphs" >revolve</text>
<g transform="translate(830 1354) scale(1.0)"><rect x="0.5" y="0.5" width="4" height="4" fill="#eee" stroke="#777" stroke-width="0.8"/><path d="M2 12Q10 10 16 14Q22 16 29 13L26 22Q20 26 14 22Q8 20 4 20Z" fill="#1f80e8"/><path d="M4 13Q10 12 15 15Q21 17 27 15L26.5 17Q20 19 14 17Q9 15 4 15Z" fill="#6abcff"/><path d="M4 20Q8 20 14 22Q20 26 26 22L25 25Q20 29 14 25Q8 23 5 23Z" fill="#0a4a9c"/></g>
<text x="845" y="1396.3" font-size="10.8" fill="#1a1a1a" text-anchor="middle" textLength="30" lengthAdjust="spacingAndGlyphs" >brail_i</text>
<g transform="translate(901.5 1354) scale(1.0)"><rect x="0.5" y="0.5" width="4" height="4" fill="#eee" stroke="#777" stroke-width="0.8"/><path d="M3 20L8 4L29 2L26 20L10 28Z" fill="#1f80e8"/><path d="M6 14L28 9L27 15L5 20Z" fill="#1aa040"/><path d="M8 4L29 2L28 6L7 9Z" fill="#4aa8f8"/><path d="M3 20L10 28L26 20" stroke="#0a4a9c" stroke-width="1.6" fill="none"/></g>
<text x="916.5" y="1396.3" font-size="10.8" fill="#1a1a1a" text-anchor="middle" textLength="31.5" lengthAdjust="spacingAndGlyphs" >s_fillet</text>
<g transform="translate(937 1354) scale(1.0)"><rect x="0.5" y="0.5" width="4" height="4" fill="#eee" stroke="#777" stroke-width="0.8"/><path d="M4 8V18Q14 26 26 18V8Z" fill="#0c6a1e"/><ellipse cx="15" cy="8" rx="11" ry="5" fill="#1a9a34"/><ellipse cx="15" cy="8" rx="6" ry="2.5" fill="#2a60c8"/><text x="13" y="29" font-size="10" font-weight="bold" fill="#0a0a0a" textLength="15" lengthAdjust="spacingAndGlyphs">9.0</text></g>
<text x="952" y="1396.3" font-size="10.8" fill="#1a1a1a" text-anchor="middle" textLength="29" lengthAdjust="spacingAndGlyphs" >round</text>
<g transform="translate(1009.5 1354) scale(1.0)"><path d="M8 4L28 2L24 20L2 26Z" fill="#1f7ae0"/><path d="M12 5L26 4L25 9L10 11Z" fill="#58b0ff"/><path d="M16 4L10 24" stroke="#0a3a84" stroke-width="1.6"/><path d="M14 20L26 28M26 28v-6M26 28h-6" stroke="#d8202c" stroke-width="2.2" fill="none"/></g>
<text x="1024.5" y="1396.3" font-size="10.8" fill="#1a1a1a" text-anchor="middle" textLength="27.5" lengthAdjust="spacingAndGlyphs" >insert</text>
<g transform="translate(1045 1354) scale(1.0)"><rect x="0.5" y="0.5" width="4" height="4" fill="#eee" stroke="#777" stroke-width="0.8"/><path d="M12 6L28 3L24 24L8 28Z" fill="#1f7ae0"/><path d="M14 8L26 6L25 11L13 14Z" fill="#4aa0f4"/><path d="M4 6l12 8M4 14l12 -8" stroke="#d8202c" stroke-width="2"/><path d="M8 16l8 2" stroke="#d8202c" stroke-width="2"/></g>
<text x="1060" y="1396.3" font-size="10.8" fill="#1a1a1a" text-anchor="middle" textLength="32" lengthAdjust="spacingAndGlyphs" >detach</text>
<g transform="translate(1116.5 1354) scale(1.0)"><rect x="0.5" y="0.5" width="4" height="4" fill="#eee" stroke="#777" stroke-width="0.8"/><path d="M5 8H25" stroke="#333" stroke-width="1.2"/><path d="M5 8l4 -2.5v5zM25 8l-4 -2.5v5z" fill="#333"/><path d="M5 4V24M25 4V24" stroke="#4a4a50" stroke-width="1.4"/><path d="M2 26L6 20H24L28 26Z" fill="#d8d8dc" stroke="#777" stroke-width="1"/><path d="M6 20H24" stroke="#3a6ab0" stroke-width="1.4"/></g>
<text x="1131.5" y="1396.3" font-size="10.8" fill="#1a1a1a" text-anchor="middle" textLength="16.5" lengthAdjust="spacingAndGlyphs" >dist</text>
<g transform="translate(1152 1354) scale(1.0)"><path d="M6 6L24 24" stroke="#3a8a3a" stroke-width="3"/><path d="M24 6L6 24" stroke="#d04030" stroke-width="2.6"/><path d="M16 18L28 28V20" fill="#e02020"/><path d="M20 20l8 8" stroke="#e02020" stroke-width="3"/><path d="M3 5h8M5 3l3 4" stroke="#3a8a3a" stroke-width="1.4"/><path d="M20 4l6 6" stroke="#aaa" stroke-width="2"/></g>
<text x="1167" y="1396.3" font-size="10.8" fill="#1a1a1a" text-anchor="middle" textLength="35" lengthAdjust="spacingAndGlyphs" >xck_loc</text>
<g transform="translate(1188 1354) scale(1.0)"><rect x="1" y="1" width="28" height="28" fill="#f4f0d8"/><path d="M1 29V16L10 12L20 29Z" fill="#2a4a6a"/><path d="M18 29V10L29 6V29Z" fill="#8a8a84"/><circle cx="15.5" cy="6" r="3.2" fill="#0a0a0a"/><path d="M12 11h6v14h3v3H10v-3h3V14h-1z" fill="#0a0a0a"/></g>
<text x="1203" y="1396.3" font-size="10.8" fill="#1a1a1a" text-anchor="middle" textLength="36" lengthAdjust="spacingAndGlyphs" >info win</text>
<g transform="translate(1223.5 1354) scale(1.0)"><rect x="0.5" y="0.5" width="4" height="4" fill="#eee" stroke="#777" stroke-width="0.8"/><path d="M4 10L20 2L29 10L16 28L6 22Z" fill="#1a5cc0"/><path d="M6 10L20 4L26 10L14 14Z" fill="#3a8ae8"/><path d="M14 14L16 28" stroke="#0a2a70" stroke-width="1.6"/><path d="M16 16L26 12" stroke="#d82030" stroke-width="2"/><path d="M18 20l4 4" stroke="#e8e8e8" stroke-width="1.6"/></g>
<text x="1238.5" y="1396.3" font-size="10.8" fill="#1a1a1a" text-anchor="middle" textLength="26" lengthAdjust="spacingAndGlyphs" >stitch</text>
<g transform="translate(1259.5 1354) scale(1.0)"><rect x="0.5" y="0.5" width="4" height="4" fill="#eee" stroke="#777" stroke-width="0.8"/><path d="M2 14L12 2L29 4L24 22L8 29Z" fill="#1f6cd4"/><path d="M8 29L24 22L29 4" stroke="#2aa0f8" stroke-width="2" fill="none"/><path d="M6 20L24 4" stroke="#0a2a70" stroke-width="1.6"/><text x="3" y="10" font-size="8.5" font-weight="bold" fill="#a8e040" textLength="12" lengthAdjust="spacingAndGlyphs">AN</text><text x="18" y="26" font-size="8.5" font-weight="bold" fill="#e8e040" textLength="7" lengthAdjust="spacingAndGlyphs">N</text><path d="M20 8L27 22" stroke="#2a9a3a" stroke-width="2"/></g>
<text x="1274.5" y="1396.3" font-size="10.8" fill="#1a1a1a" text-anchor="middle" textLength="25" lengthAdjust="spacingAndGlyphs" >rev d</text>
<g transform="translate(1295 1354) scale(1.0)"><rect x="0.5" y="0.5" width="4" height="4" fill="#eee" stroke="#777" stroke-width="0.8"/><path d="M8 6Q20 -2 26 10L29 9L26 18L18 13L22 12Q18 5 10 9Z" fill="#e02a20"/><path d="M4 14L14 10L18 18L8 22Z" fill="#c8c8d0" stroke="#667" stroke-width="1"/><path d="M8 22L22 16L28 22L14 29Z" fill="#2a6ab8"/><path d="M8 22L14 29V26L9 21Z" fill="#1a3a70"/><circle cx="9" cy="9" r="3.5" fill="#b0b4c0"/></g>
<text x="1310" y="1396.3" font-size="10.8" fill="#1a1a1a" text-anchor="middle" textLength="29.5" lengthAdjust="spacingAndGlyphs" >x_iges</text>
</g>
<path d="M277 1402.3H1455" fill="none" stroke="#8a8a92" stroke-width="1.6" />
</g>
</g>
</svg>
</body></html>
